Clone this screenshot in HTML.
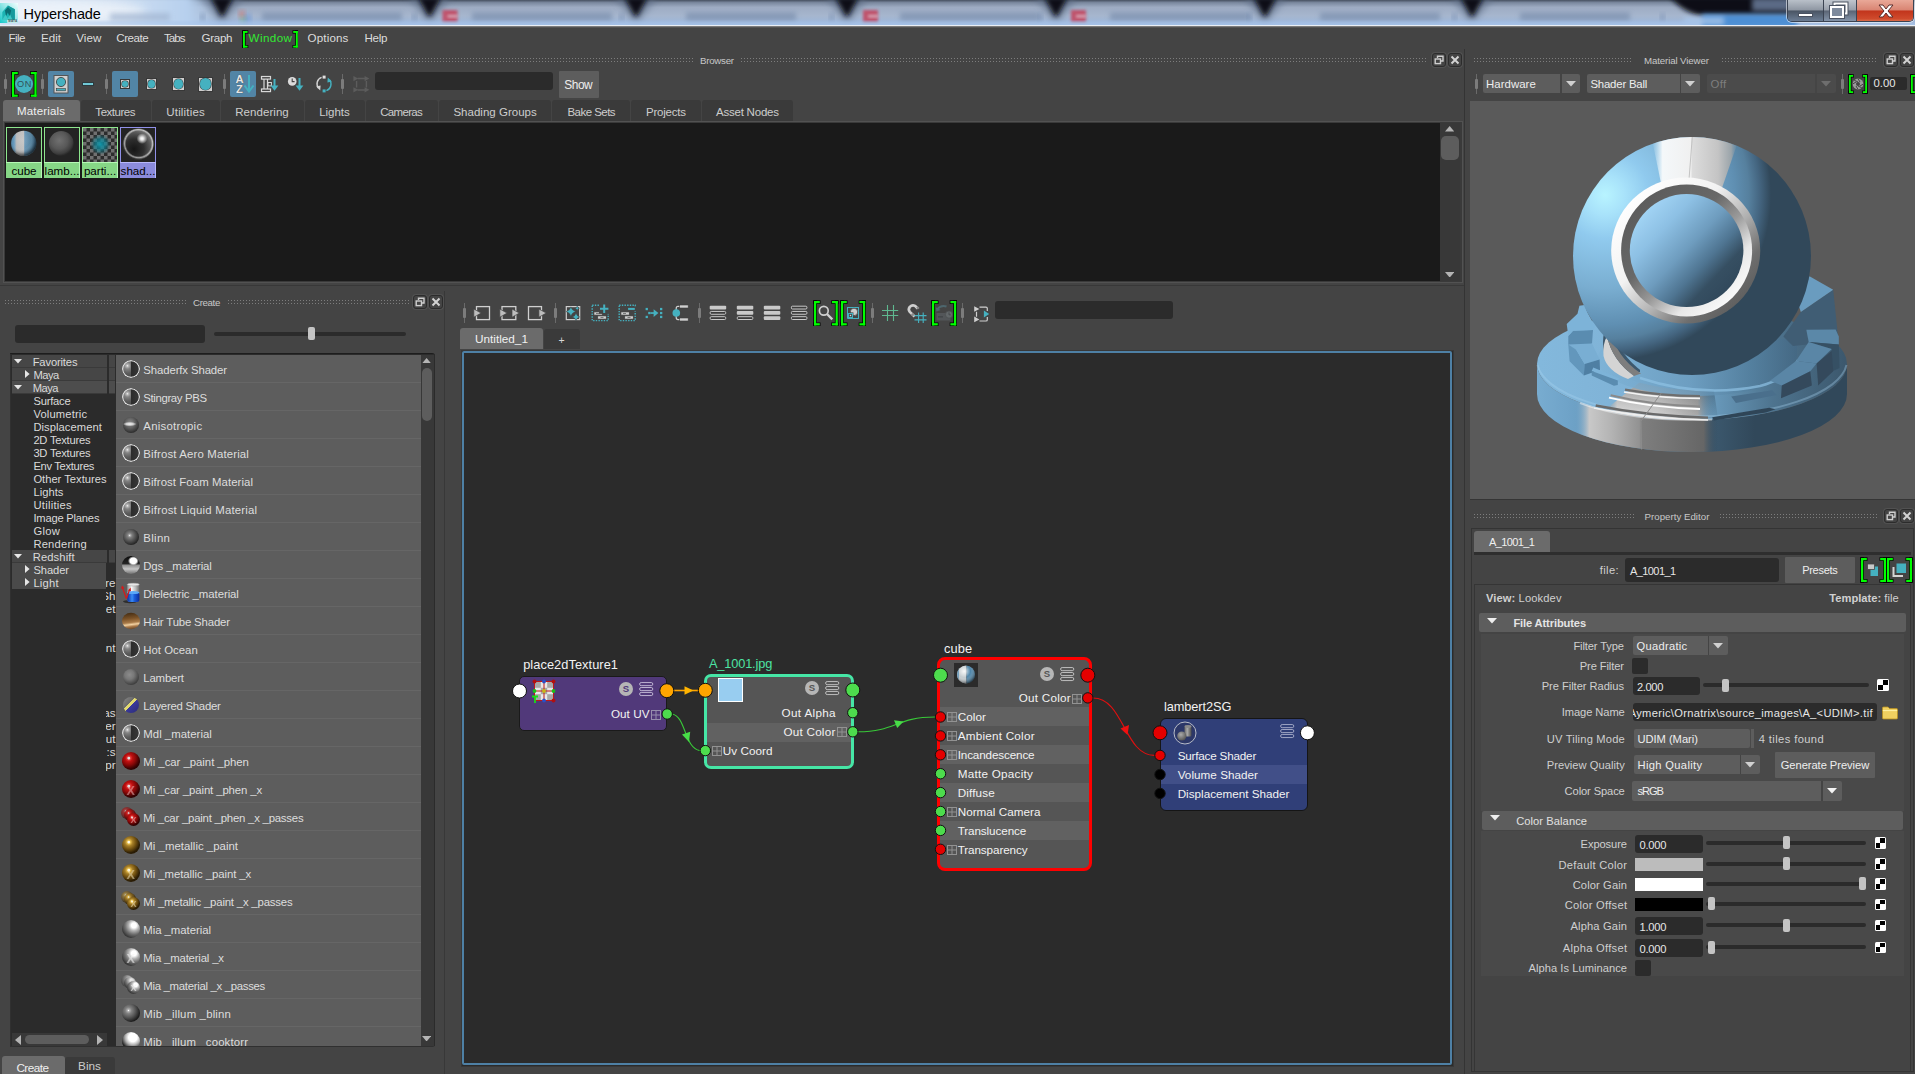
<!DOCTYPE html>
<html lang="en"><head><meta charset="utf-8"><title>Hypershade</title>
<style>
html,body{margin:0;padding:0;background:#444;}
body{width:1915px;height:1074px;overflow:hidden;position:relative;font-family:"Liberation Sans",sans-serif;}
#r{position:absolute;left:0;top:0;width:1915px;height:1074px;overflow:hidden;background:#444444;}
#r div,#r svg{position:absolute;}
.t{white-space:nowrap;}
.dots{height:6px;background-image:radial-gradient(circle,#7d7d7d 0.75px,rgba(0,0,0,0) 0.95px);background-size:3px 3px;background-position:0 0;}
</style></head>
<body><div id="r">
<svg style="left:0;top:0" width="1915" height="26" viewBox="0 0 1915 26"><defs><linearGradient id="tbg" x1="0" y1="0" x2="0" y2="1"><stop offset="0" stop-color="#465060"/><stop offset=".1" stop-color="#7a889e"/><stop offset=".28" stop-color="#9eacc3"/><stop offset=".6" stop-color="#a6b6ce"/><stop offset=".8" stop-color="#a0b7d7"/><stop offset="1" stop-color="#a9c5ea"/></linearGradient><linearGradient id="tbl" x1="0" y1="0" x2="1" y2="0"><stop offset="0" stop-color="#e6eef8"/><stop offset=".55" stop-color="#cfdff2"/><stop offset=".85" stop-color="#b7d0ee"/><stop offset="1" stop-color="#b7d0ee" stop-opacity="0"/></linearGradient><filter id="b1" x="-20%" y="-50%" width="140%" height="200%"><feGaussianBlur stdDeviation="1.4"/></filter><filter id="b2" x="-20%" y="-50%" width="140%" height="200%"><feGaussianBlur stdDeviation="2.4"/></filter><filter id="b3" x="-20%" y="-60%" width="140%" height="220%"><feGaussianBlur stdDeviation="3.2"/></filter><filter id="b4" x="-20%" y="-80%" width="140%" height="260%"><feGaussianBlur stdDeviation="5"/></filter></defs><rect width="1915" height="26" fill="url(#tbg)"/><rect x="-10" y="-4" width="232" height="34" fill="url(#tbl)" filter="url(#b2)"/><path d="M200 -3 H244 L226 20 H218Z" fill="#5a6a84" opacity=".55" filter="url(#b3)"/><path d="M210 -3 H234 L223.5 16 H220.5Z" fill="#0c1017" filter="url(#b2)"/><path d="M407.5 -3 H451.5 L433.5 20 H425.5Z" fill="#5a6a84" opacity=".55" filter="url(#b3)"/><path d="M417.5 -3 H441.5 L431.0 16 H428.0Z" fill="#0c1017" filter="url(#b2)"/><path d="M614 -3 H658 L640 20 H632Z" fill="#5a6a84" opacity=".55" filter="url(#b3)"/><path d="M624 -3 H648 L637.5 16 H634.5Z" fill="#0c1017" filter="url(#b2)"/><path d="M825 -3 H869 L851 20 H843Z" fill="#5a6a84" opacity=".55" filter="url(#b3)"/><path d="M835 -3 H859 L848.5 16 H845.5Z" fill="#0c1017" filter="url(#b2)"/><path d="M1034 -3 H1078 L1060 20 H1052Z" fill="#5a6a84" opacity=".55" filter="url(#b3)"/><path d="M1044 -3 H1068 L1057.5 16 H1054.5Z" fill="#0c1017" filter="url(#b2)"/><path d="M1243 -3 H1287 L1269 20 H1261Z" fill="#5a6a84" opacity=".55" filter="url(#b3)"/><path d="M1253 -3 H1277 L1266.5 16 H1263.5Z" fill="#0c1017" filter="url(#b2)"/><path d="M1450 -3 H1494 L1476 20 H1468Z" fill="#5a6a84" opacity=".55" filter="url(#b3)"/><path d="M1460 -3 H1484 L1473.5 16 H1470.5Z" fill="#0c1017" filter="url(#b2)"/><path d="M1670 -4 H1800 V16 H1704 Q1682 13 1670 -4Z" fill="#0b1018" filter="url(#b2)"/><rect x="1702" y="14" width="95" height="14" fill="#4d8fd4" filter="url(#b2)"/><rect x="1752" y="-2" width="40" height="13" fill="#7d93b5" opacity=".7" filter="url(#b2)"/><rect x="1684" y="17" width="40" height="8" fill="#a9c6ea" opacity=".8" filter="url(#b2)"/><rect x="262" y="12.5" width="140" height="8" fill="#7186a6" opacity=".6" filter="url(#b2)"/><rect x="472" y="12.5" width="140" height="8" fill="#7186a6" opacity=".6" filter="url(#b2)"/><rect x="686" y="12.5" width="110" height="8" fill="#7186a6" opacity=".6" filter="url(#b2)"/><rect x="900" y="12.5" width="140" height="8" fill="#7186a6" opacity=".6" filter="url(#b2)"/><rect x="1110" y="12.5" width="140" height="8" fill="#7186a6" opacity=".6" filter="url(#b2)"/><rect x="1320" y="12.5" width="120" height="8" fill="#7186a6" opacity=".6" filter="url(#b2)"/><rect x="1520" y="12.5" width="110" height="8" fill="#7186a6" opacity=".6" filter="url(#b2)"/><rect x="200" y="14" width="5" height="6" fill="#6f86aa" opacity=".55" filter="url(#b2)"/><rect x="412" y="14" width="5" height="6" fill="#6f86aa" opacity=".55" filter="url(#b2)"/><rect x="619" y="14" width="5" height="6" fill="#6f86aa" opacity=".55" filter="url(#b2)"/><rect x="829" y="14" width="5" height="6" fill="#6f86aa" opacity=".55" filter="url(#b2)"/><rect x="1038" y="14" width="5" height="6" fill="#6f86aa" opacity=".55" filter="url(#b2)"/><rect x="1247" y="14" width="5" height="6" fill="#6f86aa" opacity=".55" filter="url(#b2)"/><rect x="1452" y="14" width="5" height="6" fill="#6f86aa" opacity=".55" filter="url(#b2)"/><rect x="1660" y="14" width="5" height="6" fill="#6f86aa" opacity=".55" filter="url(#b2)"/><rect x="442.5" y="10" width="15" height="12" fill="#c63a55" opacity=".8" filter="url(#b1)"/><rect x="447.5" y="15" width="10" height="2.4" fill="#e8dbe2" opacity=".7" filter="url(#b1)"/><rect x="863" y="10" width="15" height="12" fill="#c63a55" opacity=".8" filter="url(#b1)"/><rect x="868" y="15" width="10" height="2.4" fill="#e8dbe2" opacity=".7" filter="url(#b1)"/><rect x="1071" y="10" width="15" height="12" fill="#c63a55" opacity=".8" filter="url(#b1)"/><rect x="1076" y="15" width="10" height="2.4" fill="#e8dbe2" opacity=".7" filter="url(#b1)"/><rect x="239" y="11" width="6" height="6" fill="#d86050" opacity=".55" filter="url(#b2)"/><rect x="245" y="14" width="6" height="8" fill="#5a8ad8" opacity=".5" filter="url(#b2)"/><rect x="240" y="17" width="6" height="5" fill="#58a868" opacity=".45" filter="url(#b2)"/><ellipse cx="66" cy="12" rx="80" ry="11" fill="#f2f6fb" opacity=".75" filter="url(#b4)"/><rect x="110" y="13" width="60" height="8" fill="#9fb2cf" opacity=".65" filter="url(#b2)"/><rect x="0" y="21.5" width="1700" height="3" fill="#a4c3ec" opacity=".55" filter="url(#b1)"/></svg>
<div style="left:0px;top:25px;width:1915px;height:1px;background:#e9eef5;"></div>
<div style="left:0px;top:26px;width:1915px;height:1px;background:#7c7c7c;"></div>
<div style="left:0px;top:27px;width:1915px;height:1px;background:#545454;"></div>
<svg style="left:0;top:2.8px" width="18.4" height="20.2" viewBox="0 2.8 18.4 20.2"><defs><linearGradient id="mi1" x1="1" y1="0" x2="0" y2="1"><stop offset="0" stop-color="#f4ffff"/><stop offset=".45" stop-color="#9ae8e8"/><stop offset="1" stop-color="#12c8c8"/></linearGradient></defs>
<rect x="0" y="2.8" width="18.3" height="20.2" fill="url(#mi1)"/>
<path d="M2.3 11.8 L7.8 5.4 L14.8 9 L14.8 19.6 L2.3 19.6Z" fill="#1cb4b4"/>
<path d="M7.8 5.4 L14.8 9 L14.8 19.6 L11.8 19.6 L9.8 13Z" fill="#16999c"/>
<path d="M5 10.2 L7.9 6.8 L11.2 10.4 L9.6 16.2 L7.8 12.4 L6 16.2Z" fill="#0a6e74"/>
<path d="M2.3 19.6 L5.6 14.4 L7.8 18.2 L10 14.4 L12.6 19.6Z" fill="#5fd8d6" opacity=".55"/>
<rect x="7.2" y="19.8" width="10.6" height="2.9" fill="#d4ecec" opacity=".9"/></svg>
<div class="t" style="left:8.2px;top:19.6px;font-size:3px;line-height:3px;color:#3a5a5c;font-weight:bold;letter-spacing:.2px">MAYA</div><div class="t" style="top:5.88px;font-size:14.5px;line-height:16px;color:#000;left:23.5px;letter-spacing:-0.088px;">Hypershade</div>
<div style="left:1787px;top:0px;width:127px;height:22px;border:1px solid #3b4352;border-top:none;border-radius:0 0 5px 5px;box-sizing:border-box;overflow:hidden;box-shadow:0 0 0 1px rgba(255,255,255,.55);"><div style="left:0;top:0;width:35px;height:22px;background:linear-gradient(to bottom,#b9c0c9 0%,#8f97a3 45%,#4a5564 50%,#6f8199 100%);border-right:1px solid #3b4352"></div><div style="left:36px;top:0;width:32px;height:22px;background:linear-gradient(to bottom,#c0c6ce 0%,#989fab 45%,#5b6575 50%,#8798ae 100%);border-right:1px solid #3b4352"></div><div style="left:69px;top:0;width:58px;height:22px;background:linear-gradient(to bottom,#e9a898 0%,#d98573 45%,#c2351c 50%,#cf4a2c 85%,#de7b55 100%)"></div></div>
<div style="left:1798px;top:13px;width:15px;height:4px;background:#fff;border:1px solid #4a5261;box-sizing:border-box;"></div>
<svg style="left:1828px;top:1px" width="22" height="20" viewBox="0 0 22 20"><rect x="6.5" y="2.5" width="12" height="10" fill="none" stroke="#4a5261" stroke-width="4"/><rect x="6.5" y="2.5" width="12" height="10" fill="none" stroke="#fff" stroke-width="2"/><rect x="3" y="6" width="12" height="10" fill="#7e8a9c" stroke="#4a5261" stroke-width="4"/><rect x="3" y="6" width="12" height="10" fill="#7e8a9c" stroke="#fff" stroke-width="2"/></svg>
<svg style="left:1877px;top:3px" width="18" height="16" viewBox="0 0 18 16"><path d="M2 2 L6 2 L9 6 L12 2 L16 2 L11 8 L16 14 L12 14 L9 10 L6 14 L2 14 L7 8Z" fill="#fff" stroke="#5a2c2a" stroke-width="1"/></svg>
<div class="t" style="top:29.98px;font-size:11.6px;line-height:16px;color:#dcdcdc;left:8.4px;letter-spacing:-0.529px;">File</div>
<div class="t" style="top:29.98px;font-size:11.6px;line-height:16px;color:#dcdcdc;left:41.1px;letter-spacing:-0.028px;">Edit</div>
<div class="t" style="top:29.98px;font-size:11.6px;line-height:16px;color:#dcdcdc;left:76.2px;letter-spacing:0.06px;">View</div>
<div class="t" style="top:29.98px;font-size:11.6px;line-height:16px;color:#dcdcdc;left:116.3px;letter-spacing:-0.482px;">Create</div>
<div class="t" style="top:29.98px;font-size:11.6px;line-height:16px;color:#dcdcdc;left:164px;letter-spacing:-1.0px;">Tabs</div>
<div class="t" style="top:29.98px;font-size:11.6px;line-height:16px;color:#dcdcdc;left:201.6px;letter-spacing:-0.334px;">Graph</div>
<div class="t" style="top:29.98px;font-size:11.6px;line-height:16px;color:#dcdcdc;left:307.5px;letter-spacing:0.155px;">Options</div>
<div class="t" style="top:29.98px;font-size:11.6px;line-height:16px;color:#dcdcdc;left:364.5px;letter-spacing:-0.287px;">Help</div>
<div class="t" style="top:29.98px;font-size:11.6px;line-height:16px;color:#33e833;left:248.6px;letter-spacing:0.43px;">Window</div>
<svg style="left:241.6px;top:29.6px" width="56.8" height="18.6" viewBox="-1 -1 56.8 18.6"><rect x="-0.7" y="-0.7" width="3.3" height="18.0" fill="#000"/><rect x="-0.7" y="-0.7" width="6.0" height="3.3" fill="#000"/><rect x="-0.7" y="14.000000000000002" width="6.0" height="3.3" fill="#000"/><rect x="52.199999999999996" y="-0.7" width="3.3" height="18.0" fill="#000"/><rect x="49.49999999999999" y="-0.7" width="6.0" height="3.3" fill="#000"/><rect x="49.49999999999999" y="14.000000000000002" width="6.0" height="3.3" fill="#000"/><rect x="0" y="0" width="1.9" height="16.6" fill="#00ff00"/><rect x="0" y="0" width="4.6" height="1.9" fill="#00ff00"/><rect x="0" y="14.700000000000001" width="4.6" height="1.9" fill="#00ff00"/><rect x="52.9" y="0" width="1.9" height="16.6" fill="#00ff00"/><rect x="50.199999999999996" y="0" width="4.6" height="1.9" fill="#00ff00"/><rect x="50.199999999999996" y="14.700000000000001" width="4.6" height="1.9" fill="#00ff00"/></svg>
<div class="dots" style="left:4.1px;top:56.7px;width:690px"></div>
<div class="t" style="top:53.14px;font-size:9.7px;line-height:16px;color:#c8c8c8;left:700px;letter-spacing:-0.256px;">Browser</div>
<div class="dots" style="left:740.1px;top:56.7px;width:687px"></div>
<div style="left:1432px;top:53px;width:14px;height:14px;background:#444;border:1px solid #2c2c2c;border-radius:3px;box-sizing:border-box;box-shadow:0 0 0 1px #515151;"></div>
<div style="left:1448px;top:53px;width:14px;height:14px;background:#444;border:1px solid #2c2c2c;border-radius:3px;box-sizing:border-box;box-shadow:0 0 0 1px #515151;"></div>
<svg style="left:1432px;top:53px" width="14" height="14" viewBox="0 0 14 14"><path d="M5.5 5 V3.2 H11 V8 H9" fill="none" stroke="#cfcfcf" stroke-width="1.4"/><rect x="3.2" y="6" width="5.3" height="4.6" fill="none" stroke="#cfcfcf" stroke-width="1.4"/></svg><svg style="left:1448px;top:53px" width="14" height="14" viewBox="0 0 14 14"><path d="M3.5 3.5 L10.5 10.5 M10.5 3.5 L3.5 10.5" stroke="#d2d2d2" stroke-width="2"/></svg>
<div style="left:5px;top:74px;width:1px;height:20px;background:#6a6a6a"></div><div style="left:4px;top:79.4px;width:3px;height:9.2px;background:#7c7c7c;border-radius:1px"></div>
<div style="left:42px;top:74px;width:1px;height:20px;background:#6a6a6a"></div><div style="left:41px;top:79.4px;width:3px;height:9.2px;background:#7c7c7c;border-radius:1px"></div>
<div style="left:106px;top:74px;width:1px;height:20px;background:#6a6a6a"></div><div style="left:105px;top:79.4px;width:3px;height:9.2px;background:#7c7c7c;border-radius:1px"></div>
<div style="left:224px;top:74px;width:1px;height:20px;background:#6a6a6a"></div><div style="left:223px;top:79.4px;width:3px;height:9.2px;background:#7c7c7c;border-radius:1px"></div>
<div style="left:342px;top:74px;width:1px;height:20px;background:#6a6a6a"></div><div style="left:341px;top:79.4px;width:3px;height:9.2px;background:#7c7c7c;border-radius:1px"></div>
<svg style="left:10.6px;top:70.6px" width="26.6" height="26.8" viewBox="-1 -1 26.6 26.8"><rect x="-0.7" y="-0.7" width="3.6" height="26.2" fill="#000"/><rect x="-0.7" y="-0.7" width="7.199999999999999" height="3.6" fill="#000"/><rect x="-0.7" y="21.900000000000002" width="7.199999999999999" height="3.6" fill="#000"/><rect x="21.700000000000003" y="-0.7" width="3.6" height="26.2" fill="#000"/><rect x="18.1" y="-0.7" width="7.199999999999999" height="3.6" fill="#000"/><rect x="18.1" y="21.900000000000002" width="7.199999999999999" height="3.6" fill="#000"/><rect x="0" y="0" width="2.2" height="24.8" fill="#00ff00"/><rect x="0" y="0" width="5.8" height="2.2" fill="#00ff00"/><rect x="0" y="22.6" width="5.8" height="2.2" fill="#00ff00"/><rect x="22.400000000000002" y="0" width="2.2" height="24.8" fill="#00ff00"/><rect x="18.8" y="0" width="5.8" height="2.2" fill="#00ff00"/><rect x="18.8" y="22.6" width="5.8" height="2.2" fill="#00ff00"/></svg>
<div style="left:14.8px;top:74.8px;width:18.6px;height:18.6px;border-radius:50%;background:#45b1c0"></div><div class="t" style="top:76.21px;font-size:9.2px;line-height:16px;color:#33525a;left:-175.50px;width:400px;text-align:center;letter-spacing:0.6px;">ON</div>
<div style="left:48px;top:71px;width:26px;height:26px;background:#5285a6;border-radius:2px;"></div>
<div style="left:112px;top:71px;width:26px;height:26px;background:#5285a6;border-radius:2px;"></div>
<div style="left:229.6px;top:71px;width:26px;height:26px;background:#5285a6;border-radius:2px;"></div>
<svg style="left:48px;top:71px" width="26" height="26" viewBox="0 0 26 26"><rect x="6" y="4.5" width="14" height="17.5" fill="#d0d0d0" stroke="#555" stroke-width="1"/><circle cx="13" cy="11" r="4.6" fill="#45b1c0" stroke="#3a3a3a" stroke-width=".8"/><rect x="8.5" y="17.6" width="9" height="2.2" fill="#45b1c0" stroke="#3a3a3a" stroke-width=".6"/></svg>
<div style="left:81.6px;top:82.4px;width:12.6px;height:4px;background:#45b1c0;border:1px solid #2c3a3e;box-sizing:border-box;box-shadow:inset 0 0 0 .7px #7fd0dc;"></div>
<div style="left:120.0px;top:78.9px;width:10px;height:10px;background:#cfcfcf;border:1px solid #383838;box-sizing:border-box"></div><div style="left:122.3px;top:81.2px;width:5.4px;height:5.4px;background:#45b1c0;border-radius:50%;box-shadow:0 0 0 .6px #3a3a3a"></div>
<div style="left:146.10000000000002px;top:78.3px;width:11.4px;height:11.4px;background:#cfcfcf;border:1px solid #383838;box-sizing:border-box"></div><div style="left:148.10000000000002px;top:80.3px;width:7.4px;height:7.4px;background:#45b1c0;border-radius:50%;box-shadow:0 0 0 .6px #3a3a3a"></div>
<div style="left:172.20000000000002px;top:77.4px;width:13.2px;height:13.2px;background:#cfcfcf;border:1px solid #383838;box-sizing:border-box"></div><div style="left:174.10000000000002px;top:79.3px;width:9.4px;height:9.4px;background:#45b1c0;border-radius:50%;box-shadow:0 0 0 .6px #3a3a3a"></div>
<div style="left:197.8px;top:76.5px;width:15px;height:15px;background:#cfcfcf;border:1px solid #383838;box-sizing:border-box"></div><div style="left:199.5px;top:78.2px;width:11.6px;height:11.6px;background:#45b1c0;border-radius:50%;box-shadow:0 0 0 .6px #3a3a3a"></div>
<div class="t" style="top:71.32px;font-size:11.2px;line-height:16px;color:#e6e6e6;left:235.4px;font-weight:bold;text-shadow:0 0 1px #333;">A</div>
<div class="t" style="top:81.02px;font-size:11.2px;line-height:16px;color:#e6e6e6;left:236px;font-weight:bold;text-shadow:0 0 1px #333;">Z</div>
<svg style="left:243px;top:73px" width="12" height="22" viewBox="0 0 12 22"><path d="M6 2 V17" stroke="#45b1c0" stroke-width="2"/><path d="M1.5 12.5 L6 18.5 L10.5 12.5" fill="none" stroke="#45b1c0" stroke-width="2"/></svg>
<svg style="left:260px;top:73px" width="20" height="22" viewBox="0 0 20 22"><rect x="1.5" y="3.5" width="9" height="2.6" fill="#444" stroke="#d8d8d8" stroke-width="1.2"/><rect x="1.5" y="16" width="9" height="2.6" fill="#444" stroke="#d8d8d8" stroke-width="1.2"/><path d="M4 6 V16 M7.5 6 V16" stroke="#d8d8d8" stroke-width="1.2"/><rect x="8" y="9.5" width="3.4" height="3.4" fill="#444" stroke="#d8d8d8" stroke-width="1"/><path d="M14.5 6 V16" stroke="#45b1c0" stroke-width="2"/><path d="M10.6 12.5 L14.5 17.8 L18.4 12.5Z" fill="#45b1c0"/></svg>
<svg style="left:287px;top:73px" width="18" height="22" viewBox="0 0 18 22"><circle cx="5.2" cy="8.4" r="4.3" fill="#dcdcdc"/><path d="M5.2 5.6 V8.6 H7.6" stroke="#444" stroke-width="1.1" fill="none"/><path d="M12.5 5 V16" stroke="#45b1c0" stroke-width="2"/><path d="M8.6 12.5 L12.5 17.8 L16.4 12.5Z" fill="#45b1c0"/></svg>
<svg style="left:314px;top:74px" width="20" height="20" viewBox="0 0 20 20"><path d="M7.6 3.4 A6.8 6.8 0 0 0 4.6 14.2" fill="none" stroke="#d4d4d4" stroke-width="1.4"/><path d="M2.2 12.6 L6.2 16.4 L6.6 11.6Z" fill="#d4d4d4"/><path d="M12.4 16.6 A6.8 6.8 0 0 0 15.4 5.8" fill="none" stroke="#45b1c0" stroke-width="1.4"/><path d="M17.8 7.4 L13.8 3.6 L13.4 8.4Z" fill="#45b1c0"/><rect x="8.6" y="1.6" width="3" height="3" fill="#e0e0e0"/><rect x="8.6" y="15.4" width="3" height="3" fill="#45b1c0"/></svg>
<svg style="left:352px;top:74px" width="19" height="20" viewBox="0 0 19 20"><path d="M5.5 4.5 H13.5 M5.5 16 H13.5 M4.6 7 V13.4 M14.4 7 V13.4" stroke="#5c5c5c" stroke-width="1.4" fill="none"/><path d="M1.4 2 L6.2 4.6 L1.4 7.2Z M1.4 13.2 L6.2 15.8 L1.4 18.4Z M12.6 2 L17.4 4.6 L12.6 7.2Z M12.6 13.2 L17.4 15.8 L12.6 18.4Z" fill="#5c5c5c"/></svg>
<div style="left:375px;top:72px;width:178px;height:18px;background:#2b2b2b;border-radius:3px;"></div>
<div style="left:558.5px;top:71px;width:40px;height:26.5px;background:#5d5d5d;border-radius:1px;"></div>
<div class="t" style="top:77.18px;font-size:11.9px;line-height:16px;color:#eeeeee;left:564.3px;letter-spacing:-0.451px;">Show</div>
<div style="left:3px;top:100px;width:77px;height:21px;background:#6b6b6b;border-radius:3px 3px 0 0;"></div>
<div class="t" style="top:103.22px;font-size:11.5px;line-height:16px;color:#f0f0f0;left:-158.92px;width:400px;text-align:center;letter-spacing:0.168px;">Materials</div>
<div style="left:80.5px;top:100.3px;width:70.5px;height:20.7px;background:#3a3a3a;border-radius:3px 3px 0 0;"></div>
<div class="t" style="top:104.02px;font-size:11.5px;line-height:16px;color:#cdcdcd;left:-84.84px;width:400px;text-align:center;letter-spacing:-0.481px;">Textures</div>
<div style="left:151.5px;top:100.3px;width:68.5px;height:20.7px;background:#3a3a3a;border-radius:3px 3px 0 0;"></div>
<div class="t" style="top:104.02px;font-size:11.5px;line-height:16px;color:#cdcdcd;left:-14.42px;width:400px;text-align:center;letter-spacing:0.168px;">Utilities</div>
<div style="left:220.5px;top:100.3px;width:83.0px;height:20.7px;background:#3a3a3a;border-radius:3px 3px 0 0;"></div>
<div class="t" style="top:104.02px;font-size:11.5px;line-height:16px;color:#cdcdcd;left:62.03px;width:400px;text-align:center;letter-spacing:0.053px;">Rendering</div>
<div style="left:304.5px;top:100.3px;width:60.5px;height:20.7px;background:#3a3a3a;border-radius:3px 3px 0 0;"></div>
<div class="t" style="top:104.02px;font-size:11.5px;line-height:16px;color:#cdcdcd;left:134.49px;width:400px;text-align:center;letter-spacing:-0.018px;">Lights</div>
<div style="left:366px;top:100.3px;width:71.5px;height:20.7px;background:#3a3a3a;border-radius:3px 3px 0 0;"></div>
<div class="t" style="top:104.02px;font-size:11.5px;line-height:16px;color:#cdcdcd;left:201.16px;width:400px;text-align:center;letter-spacing:-0.675px;">Cameras</div>
<div style="left:438.5px;top:100.3px;width:112.5px;height:20.7px;background:#3a3a3a;border-radius:3px 3px 0 0;"></div>
<div class="t" style="top:104.02px;font-size:11.5px;line-height:16px;color:#cdcdcd;left:295.11px;width:400px;text-align:center;letter-spacing:0.022px;">Shading Groups</div>
<div style="left:552px;top:100.3px;width:78px;height:20.7px;background:#3a3a3a;border-radius:3px 3px 0 0;"></div>
<div class="t" style="top:104.02px;font-size:11.5px;line-height:16px;color:#cdcdcd;left:391.23px;width:400px;text-align:center;letter-spacing:-0.54px;">Bake Sets</div>
<div style="left:631px;top:100.3px;width:70px;height:20.7px;background:#3a3a3a;border-radius:3px 3px 0 0;"></div>
<div class="t" style="top:104.02px;font-size:11.5px;line-height:16px;color:#cdcdcd;left:465.89px;width:400px;text-align:center;letter-spacing:-0.221px;">Projects</div>
<div style="left:702px;top:100.3px;width:91px;height:20.7px;background:#3a3a3a;border-radius:3px 3px 0 0;"></div>
<div class="t" style="top:104.02px;font-size:11.5px;line-height:16px;color:#cdcdcd;left:547.39px;width:400px;text-align:center;letter-spacing:-0.22px;">Asset Nodes</div>
<div style="left:3px;top:121px;width:1460px;height:162px;background:#3a3a3a;border:1px solid #525252;box-sizing:border-box;"></div>
<div style="left:5px;top:123px;width:1435px;height:158px;background:#1a1a1a;"></div>
<div style="left:1440px;top:123px;width:20px;height:158px;background:#383838;"></div>
<div style="left:1441px;top:136px;width:18px;height:24px;background:#5d5d5d;border-radius:5px;"></div>
<svg style="left:1444.8px;top:126px" width="9.4" height="5.6" viewBox="0 0 9.4 5.6"><path d="M0 5.6 L4.7 0 L9.4 5.6Z" fill="#b4b4b4"/></svg><svg style="left:1444.8px;top:271.9px" width="9.4" height="5.6" viewBox="0 0 9.4 5.6"><path d="M0 0 L4.7 5.6 L9.4 0Z" fill="#b4b4b4"/></svg>
<div style="left:6px;top:127px;width:36px;height:51.3px;background:#8ee68e;"></div>
<div style="left:6.9px;top:127.9px;width:34.2px;height:33.8px;background:#232323;"></div>
<div style="left:6px;top:162.4px;width:36px;height:15.9px;background:#86d686;border-top:1.4px solid #b6f8b6;border-right:1.2px solid #b6f8b6;box-sizing:border-box;"></div>
<div class="t" style="top:162.68px;font-size:11.6px;line-height:16px;color:#000;left:-176.00px;width:400px;text-align:center;">cube</div>
<div style="left:44px;top:127px;width:36px;height:51.3px;background:#8ee68e;"></div>
<div style="left:44.9px;top:127.9px;width:34.2px;height:33.8px;background:#232323;"></div>
<div style="left:44px;top:162.4px;width:36px;height:15.9px;background:#86d686;border-top:1.4px solid #b6f8b6;border-right:1.2px solid #b6f8b6;box-sizing:border-box;"></div>
<div class="t" style="top:162.68px;font-size:11.6px;line-height:16px;color:#000;left:-138.00px;width:400px;text-align:center;">lamb...</div>
<div style="left:82px;top:127px;width:36px;height:51.3px;background:#8ee68e;"></div>
<div style="left:82.9px;top:127.9px;width:34.2px;height:33.8px;background:#232323;"></div>
<div style="left:82px;top:162.4px;width:36px;height:15.9px;background:#86d686;border-top:1.4px solid #b6f8b6;border-right:1.2px solid #b6f8b6;box-sizing:border-box;"></div>
<div class="t" style="top:162.68px;font-size:11.6px;line-height:16px;color:#000;left:-100.00px;width:400px;text-align:center;">parti...</div>
<div style="left:120px;top:127px;width:36px;height:51.3px;background:#9090e8;"></div>
<div style="left:120.9px;top:127.9px;width:34.2px;height:33.8px;background:#232323;"></div>
<div style="left:120px;top:162.4px;width:36px;height:15.9px;background:#8b8bdc;border-top:1.4px solid #b8b8fa;border-right:1.2px solid #b8b8fa;box-sizing:border-box;"></div>
<div class="t" style="top:162.68px;font-size:11.6px;line-height:16px;color:#000;left:-62.00px;width:400px;text-align:center;">shad...</div>
<svg style="left:7px;top:128px" width="34" height="34" viewBox="0 0 34 34"><defs><radialGradient id="sw1" cx="42%" cy="36%" r="62%"><stop offset="0" stop-color="#fff" stop-opacity=".12"/><stop offset=".55" stop-color="#fff" stop-opacity="0"/><stop offset=".8" stop-color="#000" stop-opacity=".15"/><stop offset="1" stop-color="#000" stop-opacity=".6"/></radialGradient><linearGradient id="sw1b" x1="0" x2="1"><stop offset="0" stop-color="#4f84a8"/><stop offset=".12" stop-color="#6a9cbf"/><stop offset=".22" stop-color="#bababa"/><stop offset=".5" stop-color="#c2c2c2"/><stop offset=".54" stop-color="#6a97b6"/><stop offset=".8" stop-color="#56839f"/><stop offset="1" stop-color="#3a6482"/></linearGradient></defs><circle cx="16.7" cy="15.4" r="12.6" fill="url(#sw1b)"/><circle cx="16.7" cy="15.4" r="12.6" fill="url(#sw1)"/></svg>
<svg style="left:45px;top:128px" width="34" height="34" viewBox="0 0 34 34"><defs><radialGradient id="sw2" cx="42%" cy="38%" r="62%"><stop offset="0" stop-color="#707070"/><stop offset=".55" stop-color="#585858"/><stop offset=".85" stop-color="#3e3e3e"/><stop offset="1" stop-color="#262626"/></radialGradient></defs><circle cx="16.3" cy="15.5" r="12.4" fill="url(#sw2)"/></svg>
<svg style="left:83px;top:128px" width="34" height="34" viewBox="0 0 34 34"><defs><pattern id="chk" width="7" height="7" patternUnits="userSpaceOnUse"><rect width="7" height="7" fill="#2c2c2c"/><rect width="3.5" height="3.5" fill="#707070"/><rect x="3.5" y="3.5" width="3.5" height="3.5" fill="#707070"/></pattern><radialGradient id="sw3" cx="50%" cy="50%" r="50%"><stop offset="0" stop-color="#0e98ac" stop-opacity=".95"/><stop offset=".5" stop-color="#0f8496" stop-opacity=".7"/><stop offset="1" stop-color="#107888" stop-opacity="0"/></radialGradient></defs><rect width="34" height="34" fill="url(#chk)"/><circle cx="17.4" cy="16.4" r="10.5" fill="url(#sw3)"/></svg>
<svg style="left:121px;top:128px" width="34" height="34" viewBox="0 0 34 34"><defs><radialGradient id="sw4" gradientUnits="userSpaceOnUse" cx="13" cy="21" r="22"><stop offset="0" stop-color="#161616"/><stop offset=".45" stop-color="#2e2e2e"/><stop offset=".75" stop-color="#585858"/><stop offset="1" stop-color="#8a8a8a"/></radialGradient><radialGradient id="sw4b" cx="50%" cy="50%" r="50%"><stop offset="0" stop-color="#fff"/><stop offset=".3" stop-color="#fff" stop-opacity=".85"/><stop offset="1" stop-color="#fff" stop-opacity="0"/></radialGradient><radialGradient id="sw4c" cx="50%" cy="50%" r="50%"><stop offset=".8" stop-color="#fff" stop-opacity="0"/><stop offset=".9" stop-color="#fff" stop-opacity=".55"/><stop offset="1" stop-color="#fff" stop-opacity="0"/></radialGradient><clipPath id="sw4k"><rect width="34" height="34"/></clipPath></defs><g clip-path="url(#sw4k)"><circle cx="17" cy="16.4" r="15.3" fill="url(#sw4)"/><circle cx="17.6" cy="15.6" r="15.6" fill="url(#sw4c)"/><circle cx="21" cy="10.6" r="5.4" fill="url(#sw4b)"/></g></svg>
<div style="left:0px;top:285px;width:1464px;height:1px;background:#383838;"></div>
<div class="dots" style="left:4.1px;top:299.1px;width:183px"></div>
<div class="t" style="top:295.04px;font-size:9.7px;line-height:16px;color:#c8c8c8;left:193px;letter-spacing:-0.355px;">Create</div>
<div class="dots" style="left:227.1px;top:299.1px;width:183px"></div>
<div style="left:412.5px;top:294.5px;width:14px;height:14px;background:#444;border:1px solid #2c2c2c;border-radius:3px;box-sizing:border-box;box-shadow:0 0 0 1px #515151;"></div>
<div style="left:428.5px;top:294.5px;width:14px;height:14px;background:#444;border:1px solid #2c2c2c;border-radius:3px;box-sizing:border-box;box-shadow:0 0 0 1px #515151;"></div>
<svg style="left:412.5px;top:294.5px" width="14" height="14" viewBox="0 0 14 14"><path d="M5.5 5 V3.2 H11 V8 H9" fill="none" stroke="#cfcfcf" stroke-width="1.4"/><rect x="3.2" y="6" width="5.3" height="4.6" fill="none" stroke="#cfcfcf" stroke-width="1.4"/></svg><svg style="left:428.5px;top:294.5px" width="14" height="14" viewBox="0 0 14 14"><path d="M3.5 3.5 L10.5 10.5 M10.5 3.5 L3.5 10.5" stroke="#d2d2d2" stroke-width="2"/></svg>
<div style="left:444px;top:291px;width:1px;height:783px;background:#383838;"></div>
<div style="left:15px;top:325px;width:190px;height:18px;background:#2b2b2b;border-radius:3px;"></div>
<div style="left:214px;top:332px;width:192px;height:4px;background:#2b2b2b;border-radius:2px;"></div>
<div style="left:308px;top:327px;width:7px;height:13px;background:#c4c4c4;border-radius:2px;"></div>
<div style="left:10px;top:353px;width:425px;height:694px;background:#2b2b2b;border:1px solid #303030;border-top:2px solid #1d1d1d;border-right:1.3px solid #1d1d1d;box-sizing:border-box;border-radius:0 3px 3px 0;"></div>
<div style="left:11px;top:354px;width:424px;height:692px;background:#2b2b2b;"></div>
<div style="left:12px;top:355px;width:95px;height:12px;background:#464646;border-bottom:1px solid #3a3a3a;"></div>
<div style="left:109px;top:355px;width:6px;height:12px;background:#464646;border-bottom:1px solid #3a3a3a;"></div>
<svg style="left:14px;top:359px" width="8" height="5" viewBox="0 0 8 5"><path d="M0 0 H8 L4 4.6Z" fill="#e6e6e6"/></svg><div class="t" style="top:353.82px;font-size:11.2px;line-height:16px;color:#dadada;left:32.7px;letter-spacing:-0.152px;">Favorites</div>
<div style="left:12px;top:368px;width:95px;height:12px;background:#464646;border-bottom:1px solid #3a3a3a;"></div>
<div style="left:109px;top:368px;width:6px;height:12px;background:#464646;border-bottom:1px solid #3a3a3a;"></div>
<svg style="left:25px;top:370.3px" width="5" height="8" viewBox="0 0 5 8"><path d="M0 0 V8 L4.6 4Z" fill="#e6e6e6"/></svg><div class="t" style="top:366.82px;font-size:11.2px;line-height:16px;color:#dadada;left:33.4px;letter-spacing:-0.487px;">Maya</div>
<div style="left:12px;top:381px;width:95px;height:12px;background:#4d4d4d;border-bottom:1px solid #3a3a3a;"></div>
<div style="left:109px;top:381px;width:6px;height:12px;background:#4d4d4d;border-bottom:1px solid #3a3a3a;"></div>
<svg style="left:14px;top:385px" width="8" height="5" viewBox="0 0 8 5"><path d="M0 0 H8 L4 4.6Z" fill="#e6e6e6"/></svg><div class="t" style="top:379.82px;font-size:11.2px;line-height:16px;color:#dadada;left:32.7px;letter-spacing:-0.487px;">Maya</div>
<div class="t" style="top:392.82px;font-size:11.2px;line-height:16px;color:#dadada;left:33.4px;letter-spacing:-0.21px;">Surface</div>
<div class="t" style="top:405.82px;font-size:11.2px;line-height:16px;color:#dadada;left:33.4px;letter-spacing:0.163px;">Volumetric</div>
<div class="t" style="top:418.82px;font-size:11.2px;line-height:16px;color:#dadada;left:33.4px;letter-spacing:0.065px;">Displacement</div>
<div class="t" style="top:431.82px;font-size:11.2px;line-height:16px;color:#dadada;left:33.4px;letter-spacing:-0.24px;">2D Textures</div>
<div class="t" style="top:444.82px;font-size:11.2px;line-height:16px;color:#dadada;left:33.4px;letter-spacing:-0.24px;">3D Textures</div>
<div class="t" style="top:457.82px;font-size:11.2px;line-height:16px;color:#dadada;left:33.4px;letter-spacing:-0.315px;">Env Textures</div>
<div class="t" style="top:470.82px;font-size:11.2px;line-height:16px;color:#dadada;left:33.4px;letter-spacing:-0.005px;">Other Textures</div>
<div class="t" style="top:483.82px;font-size:11.2px;line-height:16px;color:#dadada;left:33.4px;letter-spacing:0.028px;">Lights</div>
<div class="t" style="top:496.82px;font-size:11.2px;line-height:16px;color:#dadada;left:33.4px;letter-spacing:0.28px;">Utilities</div>
<div class="t" style="top:509.82px;font-size:11.2px;line-height:16px;color:#dadada;left:33.4px;letter-spacing:-0.211px;">Image Planes</div>
<div class="t" style="top:522.82px;font-size:11.2px;line-height:16px;color:#dadada;left:33.4px;letter-spacing:0.3px;">Glow</div>
<div class="t" style="top:535.82px;font-size:11.2px;line-height:16px;color:#dadada;left:33.4px;letter-spacing:0.209px;">Rendering</div>
<div style="left:12px;top:550px;width:95px;height:12px;background:#464646;border-bottom:1px solid #3a3a3a;"></div>
<div style="left:109px;top:550px;width:6px;height:12px;background:#464646;border-bottom:1px solid #3a3a3a;"></div>
<svg style="left:14px;top:554px" width="8" height="5" viewBox="0 0 8 5"><path d="M0 0 H8 L4 4.6Z" fill="#e6e6e6"/></svg><div class="t" style="top:548.82px;font-size:11.2px;line-height:16px;color:#dadada;left:32.7px;letter-spacing:0.122px;">Redshift</div>
<div style="left:12px;top:563px;width:94px;height:13px;background:#4a4a4a;"></div>
<svg style="left:25px;top:565.3px" width="5" height="8" viewBox="0 0 5 8"><path d="M0 0 V8 L4.6 4Z" fill="#e6e6e6"/></svg><div class="t" style="top:561.82px;font-size:11.2px;line-height:16px;color:#dadada;left:33.4px;letter-spacing:-0.096px;">Shader</div>
<div style="left:12px;top:576px;width:94px;height:13px;background:#4a4a4a;"></div>
<svg style="left:25px;top:578.3px" width="5" height="8" viewBox="0 0 5 8"><path d="M0 0 V8 L4.6 4Z" fill="#e6e6e6"/></svg><div class="t" style="top:574.82px;font-size:11.2px;line-height:16px;color:#dadada;left:33.4px;letter-spacing:0.234px;">Light</div>
<div style="left:106px;top:355px;width:9.5px;height:680px;overflow:hidden;"><div class="t" style="right:0;top:220px;font-size:11.6px;line-height:16px;color:#dadada">re</div><div class="t" style="right:0;top:233px;font-size:11.6px;line-height:16px;color:#dadada">Sh</div><div class="t" style="right:0;top:246px;font-size:11.6px;line-height:16px;color:#dadada">et</div><div class="t" style="right:0;top:285px;font-size:11.6px;line-height:16px;color:#dadada">Int</div><div class="t" style="right:0;top:350px;font-size:11.6px;line-height:16px;color:#dadada">as</div><div class="t" style="right:0;top:363px;font-size:11.6px;line-height:16px;color:#dadada">er</div><div class="t" style="right:0;top:376px;font-size:11.6px;line-height:16px;color:#dadada">ut</div><div class="t" style="right:0;top:389px;font-size:11.6px;line-height:16px;color:#dadada">:s</div><div class="t" style="right:0;top:402px;font-size:11.6px;line-height:16px;color:#dadada">pr</div></div>
<div style="left:12px;top:1033px;width:95px;height:13px;background:#383838;"></div>
<div style="left:25px;top:1034.5px;width:63.5px;height:9.5px;background:#5d5d5d;border-radius:5px;"></div>
<svg style="left:14.5px;top:1034.5px" width="6" height="10" viewBox="0 0 6 10"><path d="M6 0 V10 L0 5Z" fill="#b4b4b4"/></svg><svg style="left:97px;top:1034.5px" width="6" height="10" viewBox="0 0 6 10"><path d="M0 0 V10 L6 5Z" fill="#b4b4b4"/></svg>
<div style="left:116px;top:354.7px;width:305px;height:691.3px;background:#5d5d5d;overflow:hidden;"><div style="left:0;top:0px;width:305px;height:28px;background:#5d5d5d;border-bottom:1px solid #666666;box-sizing:border-box"></div><div style="left:6px;top:5.1px;width:18px;height:18px;border-radius:50%;background:linear-gradient(to right,rgba(0,0,0,0) 48%,#2c2c2c 52%,#3a3a3a 100%),radial-gradient(circle farthest-side at 30% 32%,#f4f4f4 0%,#b8b8b8 9%,#828282 26%,#5c5c5c 60%,#484848 100%);box-shadow:inset 0 0 0 1.2px #e4e4e4;"></div><div class="t" style="top:7.05px;font-size:11.4px;line-height:16px;color:#dedede;left:27.3px;letter-spacing:-0.121px;">Shaderfx Shader</div>
<div style="left:0;top:28px;width:305px;height:28px;background:#5d5d5d;border-bottom:1px solid #666666;box-sizing:border-box"></div><div style="left:6px;top:33.1px;width:18px;height:18px;border-radius:50%;background:linear-gradient(to right,rgba(0,0,0,0) 48%,#2c2c2c 52%,#3a3a3a 100%),radial-gradient(circle farthest-side at 30% 32%,#f4f4f4 0%,#b8b8b8 9%,#828282 26%,#5c5c5c 60%,#484848 100%);box-shadow:inset 0 0 0 1.2px #e4e4e4;"></div><div class="t" style="top:35.05px;font-size:11.4px;line-height:16px;color:#dedede;left:27.3px;letter-spacing:-0.369px;">Stingray PBS</div>
<div style="left:0;top:56px;width:305px;height:28px;background:#5d5d5d;border-bottom:1px solid #666666;box-sizing:border-box"></div><div style="left:7px;top:62.099999999999994px;width:16px;height:16px;border-radius:50%;background:radial-gradient(ellipse 42% 14% at 42% 44%,#f4f4f4 0%,#cfcfcf 55%,rgba(0,0,0,0) 100%),radial-gradient(circle farthest-side at 45% 38%,#8c8c8c 0%,#666 45%,#2c2c2c 100%);"></div><div class="t" style="top:63.05px;font-size:11.4px;line-height:16px;color:#dedede;left:27.3px;letter-spacing:0.244px;">Anisotropic</div>
<div style="left:0;top:84px;width:305px;height:28px;background:#5d5d5d;border-bottom:1px solid #666666;box-sizing:border-box"></div><div style="left:6px;top:89.1px;width:18px;height:18px;border-radius:50%;background:linear-gradient(to right,rgba(0,0,0,0) 48%,#2c2c2c 52%,#3a3a3a 100%),radial-gradient(circle farthest-side at 30% 32%,#f4f4f4 0%,#b8b8b8 9%,#828282 26%,#5c5c5c 60%,#484848 100%);box-shadow:inset 0 0 0 1.2px #e4e4e4;"></div><div class="t" style="top:91.05px;font-size:11.4px;line-height:16px;color:#dedede;left:27.3px;letter-spacing:0.152px;">Bifrost Aero Material</div>
<div style="left:0;top:112px;width:305px;height:28px;background:#5d5d5d;border-bottom:1px solid #666666;box-sizing:border-box"></div><div style="left:6px;top:117.1px;width:18px;height:18px;border-radius:50%;background:linear-gradient(to right,rgba(0,0,0,0) 48%,#2c2c2c 52%,#3a3a3a 100%),radial-gradient(circle farthest-side at 30% 32%,#f4f4f4 0%,#b8b8b8 9%,#828282 26%,#5c5c5c 60%,#484848 100%);box-shadow:inset 0 0 0 1.2px #e4e4e4;"></div><div class="t" style="top:119.05px;font-size:11.4px;line-height:16px;color:#dedede;left:27.3px;letter-spacing:0.072px;">Bifrost Foam Material</div>
<div style="left:0;top:140px;width:305px;height:28px;background:#5d5d5d;border-bottom:1px solid #666666;box-sizing:border-box"></div><div style="left:6px;top:145.1px;width:18px;height:18px;border-radius:50%;background:linear-gradient(to right,rgba(0,0,0,0) 48%,#2c2c2c 52%,#3a3a3a 100%),radial-gradient(circle farthest-side at 30% 32%,#f4f4f4 0%,#b8b8b8 9%,#828282 26%,#5c5c5c 60%,#484848 100%);box-shadow:inset 0 0 0 1.2px #e4e4e4;"></div><div class="t" style="top:147.05px;font-size:11.4px;line-height:16px;color:#dedede;left:27.3px;letter-spacing:0.194px;">Bifrost Liquid Material</div>
<div style="left:0;top:168px;width:305px;height:28px;background:#5d5d5d;border-bottom:1px solid #666666;box-sizing:border-box"></div><div style="left:7px;top:174.1px;width:16px;height:16px;border-radius:50%;background:radial-gradient(circle farthest-side at 42% 40%,#ffffff 0%,#b4b4b4 8%,#7e7e7e 24%,#585858 55%,#242424 100%);"></div><div class="t" style="top:175.05px;font-size:11.4px;line-height:16px;color:#dedede;left:27.3px;letter-spacing:0.314px;">Blinn</div>
<div style="left:0;top:196px;width:305px;height:28px;background:#5d5d5d;border-bottom:1px solid #666666;box-sizing:border-box"></div><div style="left:6px;top:201.1px;width:18px;height:18px;border-radius:50%;background:radial-gradient(ellipse 30% 26% at 63% 27%,#ffffff 0%,#ffffff 62%,rgba(255,255,255,0) 100%),linear-gradient(to bottom,#0c0c0c 0%,#262626 44%,#8e8e8e 50%,#c6c6c6 72%,#707070 100%);"></div><div class="t" style="top:203.05px;font-size:11.4px;line-height:16px;color:#dedede;left:27.3px;letter-spacing:-0.148px;">Dgs _material</div>
<div style="left:0;top:224px;width:305px;height:28px;background:#5d5d5d;border-bottom:1px solid #666666;box-sizing:border-box"></div><svg style="left:5px;top:227.1px" width="22" height="22" viewBox="0 0 22 22"><defs><linearGradient id="dg1" x1="0" x2="1"><stop offset="0" stop-color="#8a8a8a"/><stop offset=".35" stop-color="#f8f8f8"/><stop offset=".7" stop-color="#b8b8b8"/><stop offset="1" stop-color="#6a6a6a"/></linearGradient><linearGradient id="dg2" x1="0" x2="1"><stop offset="0" stop-color="#0a2a9a"/><stop offset=".4" stop-color="#3a8cf4"/><stop offset=".6" stop-color="#1a5cd8"/><stop offset="1" stop-color="#0a2a9a"/></linearGradient></defs><ellipse cx="9" cy="19.6" rx="7" ry="1.6" fill="#1a1a1a" opacity=".7"/><rect x="6.2" y="1.4" width="12.2" height="18.6" rx="2.4" fill="url(#dg1)"/><rect x="6.2" y="10.4" width="12.2" height="9.6" rx="2.2" fill="url(#dg2)"/><ellipse cx="12.3" cy="10.6" rx="6.1" ry="1.5" fill="#5aa8f8"/><ellipse cx="12.3" cy="2.6" rx="6.1" ry="1.4" fill="#e8e8e8" stroke="#9a9a9a" stroke-width=".5"/><path d="M5.4 16.6 L1.4 5.4 M5.4 16.6 L8.6 7.6" stroke="#d81818" stroke-width="1.3" fill="none"/><path d="M0 6.8 L1 3.4 L3.4 6Z M7 8.4 L9.6 5.6 L10 9.2Z" fill="#d81818"/></svg><div class="t" style="top:231.05px;font-size:11.4px;line-height:16px;color:#dedede;left:27.3px;letter-spacing:-0.066px;">Dielectric _material</div>
<div style="left:0;top:252px;width:305px;height:28px;background:#5d5d5d;border-bottom:1px solid #666666;box-sizing:border-box"></div><div style="left:6px;top:257.1px;width:18px;height:18px;border-radius:50%;background:linear-gradient(172deg,#3e2810 0%,#7a5228 36%,#a87a48 58%,#f2d2a2 69%,#a87848 80%,#4a3018 100%);transform:scaleY(.92);"></div><div class="t" style="top:259.05px;font-size:11.4px;line-height:16px;color:#dedede;left:27.3px;letter-spacing:-0.172px;">Hair Tube Shader</div>
<div style="left:0;top:280px;width:305px;height:28px;background:#5d5d5d;border-bottom:1px solid #666666;box-sizing:border-box"></div><div style="left:6px;top:285.1px;width:18px;height:18px;border-radius:50%;background:linear-gradient(to right,rgba(0,0,0,0) 48%,#2c2c2c 52%,#3a3a3a 100%),radial-gradient(circle farthest-side at 30% 32%,#f4f4f4 0%,#b8b8b8 9%,#828282 26%,#5c5c5c 60%,#484848 100%);box-shadow:inset 0 0 0 1.2px #e4e4e4;"></div><div class="t" style="top:287.05px;font-size:11.4px;line-height:16px;color:#dedede;left:27.3px;letter-spacing:0.006px;">Hot Ocean</div>
<div style="left:0;top:308px;width:305px;height:28px;background:#5d5d5d;border-bottom:1px solid #666666;box-sizing:border-box"></div><div style="left:7px;top:314.1px;width:16px;height:16px;border-radius:50%;background:radial-gradient(circle farthest-side at 40% 36%,#8c8c8c 0%,#787878 45%,#3e3e3e 100%);"></div><div class="t" style="top:315.05px;font-size:11.4px;line-height:16px;color:#dedede;left:27.3px;letter-spacing:-0.183px;">Lambert</div>
<div style="left:0;top:336px;width:305px;height:28px;background:#5d5d5d;border-bottom:1px solid #666666;box-sizing:border-box"></div><div style="left:7px;top:342.1px;width:16px;height:16px;border-radius:50%;background:linear-gradient(135deg,#8a8a8a 0%,#6a6a6a 38%,#e0d870 40%,#e0d870 50%,#3a3a9a 52%,#2a2a78 100%);"></div><div class="t" style="top:343.05px;font-size:11.4px;line-height:16px;color:#dedede;left:27.3px;letter-spacing:-0.274px;">Layered Shader</div>
<div style="left:0;top:364px;width:305px;height:28px;background:#5d5d5d;border-bottom:1px solid #666666;box-sizing:border-box"></div><div style="left:6px;top:369.1px;width:18px;height:18px;border-radius:50%;background:linear-gradient(to right,rgba(0,0,0,0) 48%,#2c2c2c 52%,#3a3a3a 100%),radial-gradient(circle farthest-side at 30% 32%,#f4f4f4 0%,#b8b8b8 9%,#828282 26%,#5c5c5c 60%,#484848 100%);box-shadow:inset 0 0 0 1.2px #e4e4e4;"></div><div class="t" style="top:371.05px;font-size:11.4px;line-height:16px;color:#dedede;left:27.3px;letter-spacing:0.011px;">Mdl _material</div>
<div style="left:0;top:392px;width:305px;height:28px;background:#5d5d5d;border-bottom:1px solid #666666;box-sizing:border-box"></div><div style="left:6px;top:397.1px;width:18px;height:18px;border-radius:50%;background:radial-gradient(circle farthest-side at 38% 34%,#ececec 0%,#dcdcdc 9%,#e23c3c 15%,#c01010 30%,#8a0808 58%,#3c0202 88%,#2a0101 100%);"></div><div class="t" style="top:399.05px;font-size:11.4px;line-height:16px;color:#dedede;left:27.3px;letter-spacing:-0.042px;">Mi _car _paint _phen</div>
<div style="left:0;top:420px;width:305px;height:28px;background:#5d5d5d;border-bottom:1px solid #666666;box-sizing:border-box"></div><div style="left:6px;top:425.1px;width:18px;height:18px;border-radius:50%;background:radial-gradient(circle farthest-side at 38% 34%,#ececec 0%,#dcdcdc 9%,#e23c3c 15%,#c01010 30%,#8a0808 58%,#3c0202 88%,#2a0101 100%);"></div><div class="t" style="left:10.6px;top:428.1px;font-size:12.5px;line-height:16px;color:#f0c0c0;font-weight:bold;opacity:.5">X</div><div class="t" style="top:427.05px;font-size:11.4px;line-height:16px;color:#dedede;left:27.3px;letter-spacing:-0.121px;">Mi _car _paint _phen _x</div>
<div style="left:0;top:448px;width:305px;height:28px;background:#5d5d5d;border-bottom:1px solid #666666;box-sizing:border-box"></div><div style="left:5px;top:452.1px;width:12px;height:12px;border-radius:50%;background:radial-gradient(circle farthest-side at 38% 34%,#ececec 0%,#dcdcdc 9%,#e23c3c 15%,#c01010 30%,#8a0808 58%,#3c0202 88%,#2a0101 100%);opacity:.55"></div><div style="left:8px;top:454.1px;width:12px;height:12px;border-radius:50%;background:radial-gradient(circle farthest-side at 38% 34%,#ececec 0%,#dcdcdc 9%,#e23c3c 15%,#c01010 30%,#8a0808 58%,#3c0202 88%,#2a0101 100%);opacity:.8"></div><div style="left:11.0px;top:458.1px;width:13.0px;height:13.0px;border-radius:50%;background:radial-gradient(circle farthest-side at 38% 34%,#ececec 0%,#dcdcdc 9%,#e23c3c 15%,#c01010 30%,#8a0808 58%,#3c0202 88%,#2a0101 100%);"></div><div class="t" style="left:14.4px;top:458.5px;font-size:9px;line-height:14px;color:#f0c0c0;font-weight:bold;opacity:.55">X</div><div class="t" style="top:455.05px;font-size:11.4px;line-height:16px;color:#dedede;left:27.3px;letter-spacing:-0.229px;">Mi _car _paint _phen _x _passes</div>
<div style="left:0;top:476px;width:305px;height:28px;background:#5d5d5d;border-bottom:1px solid #666666;box-sizing:border-box"></div><div style="left:6px;top:481.1px;width:18px;height:18px;border-radius:50%;background:radial-gradient(circle farthest-side at 38% 34%,#ffffff 0%,#fff8d8 9%,#e8c050 15%,#a88028 32%,#705010 60%,#2a1c04 92%);"></div><div class="t" style="top:483.05px;font-size:11.4px;line-height:16px;color:#dedede;left:27.3px;letter-spacing:0.02px;">Mi _metallic _paint</div>
<div style="left:0;top:504px;width:305px;height:28px;background:#5d5d5d;border-bottom:1px solid #666666;box-sizing:border-box"></div><div style="left:6px;top:509.1px;width:18px;height:18px;border-radius:50%;background:radial-gradient(circle farthest-side at 38% 34%,#ffffff 0%,#fff8d8 9%,#e8c050 15%,#a88028 32%,#705010 60%,#2a1c04 92%);"></div><div class="t" style="left:10.6px;top:512.1px;font-size:12.5px;line-height:16px;color:#f0e4c0;font-weight:bold;opacity:.5">X</div><div class="t" style="top:511.05px;font-size:11.4px;line-height:16px;color:#dedede;left:27.3px;letter-spacing:-0.073px;">Mi _metallic _paint _x</div>
<div style="left:0;top:532px;width:305px;height:28px;background:#5d5d5d;border-bottom:1px solid #666666;box-sizing:border-box"></div><div style="left:5px;top:536.1px;width:12px;height:12px;border-radius:50%;background:radial-gradient(circle farthest-side at 38% 34%,#ffffff 0%,#fff8d8 9%,#e8c050 15%,#a88028 32%,#705010 60%,#2a1c04 92%);opacity:.55"></div><div style="left:8px;top:538.1px;width:12px;height:12px;border-radius:50%;background:radial-gradient(circle farthest-side at 38% 34%,#ffffff 0%,#fff8d8 9%,#e8c050 15%,#a88028 32%,#705010 60%,#2a1c04 92%);opacity:.8"></div><div style="left:11.0px;top:542.1px;width:13.0px;height:13.0px;border-radius:50%;background:radial-gradient(circle farthest-side at 38% 34%,#ffffff 0%,#fff8d8 9%,#e8c050 15%,#a88028 32%,#705010 60%,#2a1c04 92%);"></div><div class="t" style="left:14.4px;top:542.5px;font-size:9px;line-height:14px;color:#f0e4c0;font-weight:bold;opacity:.55">X</div><div class="t" style="top:539.05px;font-size:11.4px;line-height:16px;color:#dedede;left:27.3px;letter-spacing:-0.201px;">Mi _metallic _paint _x _passes</div>
<div style="left:0;top:560px;width:305px;height:28px;background:#5d5d5d;border-bottom:1px solid #666666;box-sizing:border-box"></div><div style="left:6px;top:565.1px;width:18px;height:18px;border-radius:50%;background:radial-gradient(circle farthest-side at 66% 30%,#ffffff 0%,#ffffff 20%,#b4b4b4 42%,#707070 70%,#3a3a3a 100%);"></div><div class="t" style="top:567.05px;font-size:11.4px;line-height:16px;color:#dedede;left:27.3px;letter-spacing:-0.056px;">Mia _material</div>
<div style="left:0;top:588px;width:305px;height:28px;background:#5d5d5d;border-bottom:1px solid #666666;box-sizing:border-box"></div><div style="left:6px;top:593.1px;width:18px;height:18px;border-radius:50%;background:radial-gradient(circle farthest-side at 66% 30%,#ffffff 0%,#ffffff 20%,#b4b4b4 42%,#707070 70%,#3a3a3a 100%);"></div><div class="t" style="left:10.6px;top:596.1px;font-size:12.5px;line-height:16px;color:#f4f4f4;font-weight:bold;opacity:.55">X</div><div class="t" style="top:595.05px;font-size:11.4px;line-height:16px;color:#dedede;left:27.3px;letter-spacing:-0.191px;">Mia _material _x</div>
<div style="left:0;top:616px;width:305px;height:28px;background:#5d5d5d;border-bottom:1px solid #666666;box-sizing:border-box"></div><div style="left:5px;top:620.1px;width:12px;height:12px;border-radius:50%;background:radial-gradient(circle farthest-side at 66% 30%,#ffffff 0%,#ffffff 20%,#b4b4b4 42%,#707070 70%,#3a3a3a 100%);opacity:.5"></div><div style="left:8px;top:622.1px;width:12px;height:12px;border-radius:50%;background:radial-gradient(circle farthest-side at 66% 30%,#ffffff 0%,#ffffff 20%,#b4b4b4 42%,#707070 70%,#3a3a3a 100%);opacity:.75"></div><div style="left:11.0px;top:626.1px;width:13.0px;height:13.0px;border-radius:50%;background:radial-gradient(circle farthest-side at 66% 30%,#ffffff 0%,#ffffff 20%,#b4b4b4 42%,#707070 70%,#3a3a3a 100%);"></div><div class="t" style="left:14.4px;top:626.5px;font-size:9px;line-height:14px;color:#f4f4f4;font-weight:bold;opacity:.6">X</div><div class="t" style="top:623.05px;font-size:11.4px;line-height:16px;color:#dedede;left:27.3px;letter-spacing:-0.311px;">Mia _material _x _passes</div>
<div style="left:0;top:644px;width:305px;height:28px;background:#5d5d5d;border-bottom:1px solid #666666;box-sizing:border-box"></div><div style="left:6px;top:649.1px;width:18px;height:18px;border-radius:50%;background:radial-gradient(circle farthest-side at 36% 36%,#ffffff 0%,#b0b0b0 10%,#808080 28%,#5a5a5a 58%,#1e1e1e 100%);"></div><div class="t" style="top:651.05px;font-size:11.4px;line-height:16px;color:#dedede;left:27.3px;letter-spacing:0.172px;">Mib _illum _blinn</div>
<div style="left:0;top:672px;width:305px;height:28px;background:#5d5d5d;border-bottom:1px solid #666666;box-sizing:border-box"></div><div style="left:6px;top:677.1px;width:18px;height:18px;border-radius:50%;background:radial-gradient(circle farthest-side at 60% 30%,#ffffff 0%,#ffffff 34%,#b0b0b0 60%,#1a1a1a 96%);"></div><div class="t" style="top:679.05px;font-size:11.4px;line-height:16px;color:#dedede;left:27.3px;letter-spacing:0.146px;">Mib _illum _cooktorr</div>
</div>
<div style="left:421px;top:355px;width:12.6px;height:691px;background:#383838;"></div>
<div style="left:422.2px;top:368px;width:9.4px;height:53px;background:#5d5d5d;border-radius:5px;"></div>
<svg style="left:421.9px;top:357.6px" width="9.2" height="5.5" viewBox="0 0 9.2 5.5"><path d="M0 5.5 L4.6 0 L9.2 5.5Z" fill="#b4b4b4"/></svg><svg style="left:421.9px;top:1035.8px" width="9.2" height="5.5" viewBox="0 0 9.2 5.5"><path d="M0 0 L4.6 5.5 L9.2 0Z" fill="#b4b4b4"/></svg>
<div style="left:1.5px;top:1056px;width:63px;height:18px;background:#6b6b6b;border-radius:3px 3px 0 0;"></div>
<div class="t" style="top:1059.93px;font-size:11.75px;line-height:16px;color:#f0f0f0;left:-167.57px;width:400px;text-align:center;letter-spacing:-0.536px;">Create</div>
<div style="left:64.5px;top:1056.5px;width:50px;height:18px;background:#3a3a3a;border-radius:3px 3px 0 0;"></div>
<div class="t" style="top:1057.73px;font-size:11.75px;line-height:16px;color:#cdcdcd;left:-110.50px;width:400px;text-align:center;">Bins</div>
<div style="left:463.5px;top:303px;width:1px;height:20px;background:#6a6a6a"></div><div style="left:462.5px;top:308.4px;width:3px;height:9.2px;background:#7c7c7c;border-radius:1px"></div>
<div style="left:554.5px;top:303px;width:1px;height:20px;background:#6a6a6a"></div><div style="left:553.5px;top:308.4px;width:3px;height:9.2px;background:#7c7c7c;border-radius:1px"></div>
<div style="left:699.3px;top:303px;width:1px;height:20px;background:#6a6a6a"></div><div style="left:698.3px;top:308.4px;width:3px;height:9.2px;background:#7c7c7c;border-radius:1px"></div>
<div style="left:871.5px;top:303px;width:1px;height:20px;background:#6a6a6a"></div><div style="left:870.5px;top:308.4px;width:3px;height:9.2px;background:#7c7c7c;border-radius:1px"></div>
<div style="left:962.4px;top:303px;width:1px;height:20px;background:#6a6a6a"></div><div style="left:961.4px;top:308.4px;width:3px;height:9.2px;background:#7c7c7c;border-radius:1px"></div>
<svg style="left:460px;top:298px" width="540" height="30" viewBox="460 298 540 30"><rect x="476.5" y="306.6" width="13" height="13" fill="none" stroke="#cfcfcf" stroke-width="1.3"/><path d="M473.8 309.0 L481.2 313.1 L473.8 317.20000000000005Z" fill="#bdbdbd" stroke="#444" stroke-width=".7"/><rect x="502" y="306.6" width="13.8" height="13" fill="none" stroke="#cfcfcf" stroke-width="1.3"/><path d="M499.8 309.0 L507.2 313.1 L499.8 317.20000000000005Z" fill="#bdbdbd" stroke="#444" stroke-width=".7"/><path d="M512 309.0 L519.4 313.1 L512 317.20000000000005Z" fill="#bdbdbd" stroke="#444" stroke-width=".7"/><rect x="528.5" y="306.6" width="13" height="13" fill="none" stroke="#cfcfcf" stroke-width="1.3"/><path d="M538.9 309.0 L546.3 313.1 L538.9 317.20000000000005Z" fill="#bdbdbd" stroke="#444" stroke-width=".7"/><rect x="566.3" y="306.6" width="13.4" height="13" fill="none" stroke="#cfcfcf" stroke-width="1.2"/><path d="M570.9 306.8 Q571.956 310.54400000000004 575.6999999999999 311.6 Q571.956 312.656 570.9 316.40000000000003 Q569.8439999999999 312.656 566.1 311.6 Q569.8439999999999 310.54400000000004 570.9 306.8Z" fill="#45b1c0" stroke="#444" stroke-width=".5"/><path d="M576 313.2 Q576.814 316.08599999999996 579.7 316.9 Q576.814 317.714 576 320.59999999999997 Q575.186 317.714 572.3 316.9 Q575.186 316.08599999999996 576 313.2Z" fill="#45b1c0" stroke="#444" stroke-width=".5"/><path d="M577.2 306.1 Q577.6840000000001 307.81600000000003 579.4000000000001 308.3 Q577.6840000000001 308.784 577.2 310.5 Q576.716 308.784 575.0 308.3 Q576.716 307.81600000000003 577.2 306.1Z" fill="#45b1c0" stroke="#444" stroke-width=".5"/><rect x="592.2" y="305.2" width="16" height="15.4" fill="none" stroke="#45b1c0" stroke-width="1.4" stroke-dasharray="1.4 1.25"/><rect x="593.9" y="311.9" width="8.4" height="3.2" fill="#cfcfcf" stroke="#3c3c3c" stroke-width=".7"/><rect x="596.0" y="313" width="3" height="1" fill="#777"/><rect x="597.7" y="315.9" width="8.6" height="3.2" fill="#cfcfcf" stroke="#3c3c3c" stroke-width=".7"/><rect x="600.5" y="317" width="3" height="1" fill="#777"/><rect x="599" y="303.5" width="10.4" height="10.4" fill="#444"/><path d="M604.2 304.6 V313 M600 308.8 H608.4" stroke="#45b1c0" stroke-width="2"/><rect x="619.2" y="305.2" width="16" height="15.4" fill="none" stroke="#45b1c0" stroke-width="1.4" stroke-dasharray="1.4 1.25"/><rect x="620.9" y="311.9" width="8.4" height="3.2" fill="#cfcfcf" stroke="#3c3c3c" stroke-width=".7"/><rect x="623.0" y="313" width="3" height="1" fill="#777"/><rect x="624.7" y="315.9" width="8.6" height="3.2" fill="#cfcfcf" stroke="#3c3c3c" stroke-width=".7"/><rect x="627.5" y="317" width="3" height="1" fill="#777"/><rect x="627" y="306.6" width="9" height="4.6" fill="#444"/><path d="M628.1 308.9 H634.8" stroke="#45b1c0" stroke-width="2"/><g fill="#45b1c0" transform="translate(0,1)"><rect x="645.6" y="306.9" width="2.3" height="2.3"/><rect x="645.6" y="314.8" width="2.3" height="2.3"/><rect x="648.2" y="310.9" width="2.3" height="2.3"/><rect x="660" y="306.9" width="2.3" height="2.3"/><rect x="660" y="310.9" width="2.3" height="2.3"/><rect x="660" y="314.8" width="2.3" height="2.3"/><rect x="650.5" y="311.2" width="4" height="1.7"/><path d="M653.6 308.2 L658.4 312.05 L653.6 315.9Z"/></g><path d="M681 306.4 H678 Q676.2 306.4 676.2 308.4 V317.6 Q676.2 319.6 678 319.6 H681" fill="none" stroke="#cfcfcf" stroke-width="1.2"/><circle cx="676.3" cy="313" r="3.8" fill="#45b1c0"/><rect x="679.6" y="305" width="8.6" height="3" fill="#cfcfcf" stroke="#3c3c3c" stroke-width=".6"/><rect x="679.6" y="318" width="8.6" height="3" fill="#cfcfcf" stroke="#3c3c3c" stroke-width=".6"/><rect x="709.7" y="305.7" width="16.5" height="3.8" rx="1" fill="#c9c9c9"/><rect x="710.2" y="311.45" width="15.5" height="2.8" rx="1" fill="#3c3c3c" stroke="#c9c9c9" stroke-width="1"/><rect x="710.2" y="316.7" width="15.5" height="2.8" rx="1" fill="#3c3c3c" stroke="#c9c9c9" stroke-width="1"/><rect x="736.8" y="305.7" width="16.5" height="3.8" rx="1" fill="#c9c9c9"/><rect x="736.8" y="310.95" width="16.5" height="3.8" rx="1" fill="#c9c9c9"/><rect x="737.3" y="316.7" width="15.5" height="2.8" rx="1" fill="#3c3c3c" stroke="#c9c9c9" stroke-width="1"/><rect x="763.8" y="305.7" width="16.5" height="3.8" rx="1" fill="#c9c9c9"/><rect x="763.8" y="310.95" width="16.5" height="3.8" rx="1" fill="#c9c9c9"/><rect x="763.8" y="316.2" width="16.5" height="3.8" rx="1" fill="#c9c9c9"/><rect x="791.4" y="306.2" width="15.5" height="2.8" rx="1" fill="#3c3c3c" stroke="#c9c9c9" stroke-width="1"/><rect x="791.4" y="311.45" width="15.5" height="2.8" rx="1" fill="#3c3c3c" stroke="#c9c9c9" stroke-width="1"/><rect x="791.4" y="316.7" width="15.5" height="2.8" rx="1" fill="#3c3c3c" stroke="#c9c9c9" stroke-width="1"/><circle cx="823.8" cy="310.7" r="4.4" fill="none" stroke="#cfcfcf" stroke-width="1.7"/><path d="M827 314 L832.3 319.3" stroke="#cfcfcf" stroke-width="2.4"/><rect x="847.5" y="307.5" width="11" height="11" fill="none" stroke="#45b1c0" stroke-width="1"/><circle cx="854" cy="311.9" r="3.7" fill="#cdcdcd" stroke="#444" stroke-width=".7"/><rect x="846.6" y="312.4" width="6.8" height="6.8" fill="#444"/><rect x="848.5" y="313.5" width="4" height="4" fill="#444" stroke="#45b1c0" stroke-width="1"/><rect x="849.8" y="314.8" width="1.4" height="1.4" fill="#d8d8d8"/><path d="M847.5 312 V318.5 H853.8" fill="none" stroke="#45b1c0" stroke-width="1"/><path d="M887.5 304.9 V320.9 M893.5 304.9 V320.9 M882 310.5 H898.2 M882 315.5 H898.2" stroke="#5fb890" stroke-width="1.1"/><path d="M916.5 308.2 L913.8 305.6 Q911 304.2 908.6 306.6 Q906.6 309.2 908.6 311.6 L913.4 316.2" fill="none" stroke="#cfcfcf" stroke-width="2.7" transform="translate(1.2,.3)"/><path d="M911.8 313.8 L913.6 315.6 M917 307 L918.7 308.8" stroke="#8a8a8a" stroke-width="2.3"/><path d="M918.6 312.5 V323 M923.2 312.5 V323 M914.5 315.6 H926.5 M914.5 319.9 H926.5" stroke="#45b1c0" stroke-width="1.1"/><g opacity=".9"><path d="M937 309.5 Q941 304.5 946.5 306.5" fill="none" stroke="#4f6a72" stroke-width="2"/><path d="M935.8 307.2 L936.4 311.6 L940.6 310Z" fill="#4f6a72"/><rect x="936.5" y="313" width="14" height="7.5" fill="#55595c"/><rect x="938" y="316" width="5" height="1.6" fill="#44484b"/><circle cx="949" cy="314.6" r="3.6" fill="#666b6e" stroke="#4c5052" stroke-width=".8"/><path d="M949 312.4 V314.8 H950.8" stroke="#44484b" stroke-width=".9" fill="none"/></g><path d="M979.5 307.2 H986 Q987.3 307.2 987.3 308.5 V311 M987.3 317 V319.7 Q987.3 321 986 321 H979.5 M976.5 311.8 V316.8" fill="none" stroke="#cfcfcf" stroke-width="1.2"/><path d="M974.2 306.2 L979.4 309 L974.2 311.8Z M974.2 316.6 L979.4 319.4 L974.2 322.2Z" fill="#cfcfcf"/><path d="M983.9 310.6 L989.2 314.1 L983.9 317.6Z" fill="#45b1c0"/></svg><svg style="left:812.9px;top:299.7px" width="25.8" height="26.4" viewBox="-1 -1 25.8 26.4"><rect x="-0.7" y="-0.7" width="3.6" height="25.799999999999997" fill="#000"/><rect x="-0.7" y="-0.7" width="7.199999999999999" height="3.6" fill="#000"/><rect x="-0.7" y="21.5" width="7.199999999999999" height="3.6" fill="#000"/><rect x="20.900000000000002" y="-0.7" width="3.6" height="25.799999999999997" fill="#000"/><rect x="17.3" y="-0.7" width="7.199999999999999" height="3.6" fill="#000"/><rect x="17.3" y="21.5" width="7.199999999999999" height="3.6" fill="#000"/><rect x="0" y="0" width="2.2" height="24.4" fill="#00ff00"/><rect x="0" y="0" width="5.8" height="2.2" fill="#00ff00"/><rect x="0" y="22.2" width="5.8" height="2.2" fill="#00ff00"/><rect x="21.6" y="0" width="2.2" height="24.4" fill="#00ff00"/><rect x="18.0" y="0" width="5.8" height="2.2" fill="#00ff00"/><rect x="18.0" y="22.2" width="5.8" height="2.2" fill="#00ff00"/></svg>
<svg style="left:839.9px;top:299.7px" width="26.2" height="26.4" viewBox="-1 -1 26.2 26.4"><rect x="-0.7" y="-0.7" width="3.6" height="25.799999999999997" fill="#000"/><rect x="-0.7" y="-0.7" width="7.199999999999999" height="3.6" fill="#000"/><rect x="-0.7" y="21.5" width="7.199999999999999" height="3.6" fill="#000"/><rect x="21.3" y="-0.7" width="3.6" height="25.799999999999997" fill="#000"/><rect x="17.7" y="-0.7" width="7.199999999999999" height="3.6" fill="#000"/><rect x="17.7" y="21.5" width="7.199999999999999" height="3.6" fill="#000"/><rect x="0" y="0" width="2.2" height="24.4" fill="#00ff00"/><rect x="0" y="0" width="5.8" height="2.2" fill="#00ff00"/><rect x="0" y="22.2" width="5.8" height="2.2" fill="#00ff00"/><rect x="22.0" y="0" width="2.2" height="24.4" fill="#00ff00"/><rect x="18.4" y="0" width="5.8" height="2.2" fill="#00ff00"/><rect x="18.4" y="22.2" width="5.8" height="2.2" fill="#00ff00"/></svg>
<svg style="left:930.8px;top:299.7px" width="26.2" height="26.4" viewBox="-1 -1 26.2 26.4"><rect x="-0.7" y="-0.7" width="3.6" height="25.799999999999997" fill="#000"/><rect x="-0.7" y="-0.7" width="7.199999999999999" height="3.6" fill="#000"/><rect x="-0.7" y="21.5" width="7.199999999999999" height="3.6" fill="#000"/><rect x="21.3" y="-0.7" width="3.6" height="25.799999999999997" fill="#000"/><rect x="17.7" y="-0.7" width="7.199999999999999" height="3.6" fill="#000"/><rect x="17.7" y="21.5" width="7.199999999999999" height="3.6" fill="#000"/><rect x="0" y="0" width="2.2" height="24.4" fill="#00ff00"/><rect x="0" y="0" width="5.8" height="2.2" fill="#00ff00"/><rect x="0" y="22.2" width="5.8" height="2.2" fill="#00ff00"/><rect x="22.0" y="0" width="2.2" height="24.4" fill="#00ff00"/><rect x="18.4" y="0" width="5.8" height="2.2" fill="#00ff00"/><rect x="18.4" y="22.2" width="5.8" height="2.2" fill="#00ff00"/></svg>
<div style="left:995.3px;top:301px;width:178px;height:17.6px;background:#2b2b2b;border-radius:3px;"></div>
<div style="left:460px;top:328px;width:83px;height:21px;background:#6b6b6b;border-radius:3px 3px 0 0;"></div>
<div class="t" style="top:331.13px;font-size:11.75px;line-height:16px;color:#f0f0f0;left:301.50px;width:400px;text-align:center;">Untitled_1</div>
<div style="left:543.5px;top:328.5px;width:36.5px;height:20.5px;background:#3a3a3a;border-radius:3px 3px 0 0;"></div>
<div class="t" style="top:332.36px;font-size:10.5px;line-height:16px;color:#d8d8d8;left:361.50px;width:400px;text-align:center;">+</div>
<div style="left:460.5px;top:350px;width:993px;height:716.5px;background:#2b2b2b;border:1px solid #383838;box-sizing:border-box;"></div>
<div style="left:462px;top:351px;width:990px;height:714px;background:#2b2b2b;border:2px solid #4e80a5;box-sizing:border-box;border-radius:2px;"></div>
<div class="t" style="top:656.56px;font-size:12.8px;line-height:16px;color:#f2f2f2;left:523.2px;letter-spacing:0.063px;">place2dTexture1</div>
<div style="left:519px;top:676px;width:148px;height:54.5px;background:#51397a;border:1px solid #1a1a1a;border-radius:5px;box-sizing:border-box;"></div>
<div style="left:619px;top:682px;width:14px;height:14px;border-radius:50%;background:#b6b6b6"></div><div class="t" style="left:619px;top:680.9px;width:14px;text-align:center;font-size:9.6px;line-height:16px;font-weight:bold;color:#51397a">S</div><svg style="left:638.5px;top:682.3px" width="15" height="15" viewBox="0 0 15 15"><rect x=".6" y="0.55" width="13.2" height="3.1" rx="1.55" fill="none" stroke="#c8c0da" stroke-width=".9"/><rect x=".6" y="5.5" width="13.2" height="3.1" rx="1.55" fill="none" stroke="#c8c0da" stroke-width=".9"/><rect x=".6" y="10.450000000000001" width="13.2" height="3.1" rx="1.55" fill="none" stroke="#c8c0da" stroke-width=".9"/></svg><div class="t" style="top:705.95px;font-size:11.7px;line-height:16px;color:#f2f2f2;right:1265.45px;text-align:right;letter-spacing:0.054px;">Out UV</div>
<svg style="left:651px;top:710px" width="10" height="10" viewBox="0 0 10 10"><rect x=".5" y=".5" width="9" height="9" fill="none" stroke="#968eac" stroke-width="1"/><path d="M5 1 V9 M1 5 H9" stroke="#968eac" stroke-width="1"/></svg><svg style="left:532px;top:679px" width="24" height="24" viewBox="0 0 24 24"><rect x="2.5" y="2.5" width="19" height="19" fill="#e8e8e8"/><rect x="2.5" y="2.5" width="6.3" height="6.3" fill="#a8a8a8"/><rect x="15.2" y="2.5" width="6.3" height="6.3" fill="#a8a8a8"/><rect x="2.5" y="15.2" width="6.3" height="6.3" fill="#a8a8a8"/><rect x="15.2" y="15.2" width="6.3" height="6.3" fill="#a8a8a8"/><rect x="8.8" y="8.8" width="6.4" height="6.4" fill="#a8a8a8"/><path d="M2.5 2.5 H21.5 V21.5 H2.5Z M12 2.5 V21.5 M2.5 12 H21.5" fill="none" stroke="#c01818" stroke-width="1"/><g fill="#b01010"><circle cx="2.5" cy="2.5" r="2"/><circle cx="21.5" cy="2.5" r="2"/><circle cx="21.5" cy="21.5" r="2"/></g><g fill="#2850c8"><circle cx="12" cy="2.5" r="1.9"/><circle cx="12" cy="21.5" r="1.9"/></g><g fill="#18c018"><circle cx="2.5" cy="12" r="1.9"/><circle cx="21.5" cy="12" r="1.9"/></g><circle cx="12" cy="12" r="1.9" fill="#c8b818"/><path d="M0 17.5 H6 M3 17.5 V24" stroke="#18e018" stroke-width="1.8"/></svg><div class="t" style="top:655.76px;font-size:12.8px;line-height:16px;color:#4de3a3;left:708.9px;letter-spacing:-0.152px;">A_1001.jpg</div>
<div style="left:704px;top:674px;width:150px;height:95px;background:#555555;border:3px solid #46e6a6;border-radius:7px;box-sizing:border-box;overflow:hidden;"><div style="left:0;top:46px;width:150px;height:19px;background:#616161"></div></div>
<div style="left:718px;top:678px;width:24.5px;height:24px;background:#98cdf0;border:1.5px solid #fff;box-sizing:border-box;"></div>
<div style="left:805px;top:681px;width:14px;height:14px;border-radius:50%;background:#b6b6b6"></div><div class="t" style="left:805px;top:679.9px;width:14px;text-align:center;font-size:9.6px;line-height:16px;font-weight:bold;color:#555">S</div><svg style="left:824.5px;top:681px" width="15" height="15" viewBox="0 0 15 15"><rect x=".6" y="0.55" width="13.2" height="3.1" rx="1.55" fill="none" stroke="#c8c8c8" stroke-width=".9"/><rect x=".6" y="5.5" width="13.2" height="3.1" rx="1.55" fill="none" stroke="#c8c8c8" stroke-width=".9"/><rect x=".6" y="10.450000000000001" width="13.2" height="3.1" rx="1.55" fill="none" stroke="#c8c8c8" stroke-width=".9"/></svg><div class="t" style="top:704.75px;font-size:11.7px;line-height:16px;color:#f2f2f2;right:1079.07px;text-align:right;letter-spacing:0.332px;">Out Alpha</div>
<div class="t" style="top:723.75px;font-size:11.7px;line-height:16px;color:#f2f2f2;right:1079.48px;text-align:right;letter-spacing:0.223px;">Out Color</div>
<svg style="left:837px;top:727px" width="10" height="10" viewBox="0 0 10 10"><rect x=".5" y=".5" width="9" height="9" fill="none" stroke="#929292" stroke-width="1"/><path d="M5 1 V9 M1 5 H9" stroke="#929292" stroke-width="1"/></svg><svg style="left:712px;top:746px" width="10" height="10" viewBox="0 0 10 10"><rect x=".5" y=".5" width="9" height="9" fill="none" stroke="#929292" stroke-width="1"/><path d="M5 1 V9 M1 5 H9" stroke="#929292" stroke-width="1"/></svg><div class="t" style="top:742.65px;font-size:11.7px;line-height:16px;color:#f2f2f2;left:722.8px;letter-spacing:0.032px;">Uv Coord</div>
<div class="t" style="top:640.76px;font-size:12.8px;line-height:16px;color:#f2f2f2;left:944px;letter-spacing:0.083px;">cube</div>
<div style="left:937px;top:657px;width:155px;height:214px;background:#555555;border:3.6px solid #ff0000;border-radius:8px;box-sizing:border-box;overflow:hidden;"><div style="left:0;top:47px;width:160px;height:19px;background:#616161"></div><div style="left:0;top:85px;width:160px;height:19px;background:#616161"></div><div style="left:0;top:123px;width:160px;height:19px;background:#616161"></div><div style="left:0;top:161px;width:160px;height:19px;background:#616161"></div></div>
<div style="left:954px;top:663px;width:24px;height:24px;background:#2b2b2b;"></div>
<svg style="left:954px;top:663px" width="24" height="24" viewBox="0 0 24 24"><defs><radialGradient id="cb1" cx="40%" cy="32%" r="70%"><stop offset="0" stop-color="#fff" stop-opacity=".9"/><stop offset=".5" stop-color="#fff" stop-opacity="0"/><stop offset="1" stop-color="#000" stop-opacity=".6"/></radialGradient><clipPath id="cbc"><circle cx="12" cy="11.5" r="9"/></clipPath></defs><g clip-path="url(#cbc)"><rect x="2" y="2" width="10.5" height="20" fill="#c4ccd0"/><rect x="12.5" y="2" width="10" height="20" fill="#4f86aa"/><rect x="2" y="2" width="3" height="20" fill="#6f9dbb"/></g><circle cx="12" cy="11.5" r="9" fill="url(#cb1)"/></svg><div style="left:1040px;top:667px;width:14px;height:14px;border-radius:50%;background:#b6b6b6"></div><div class="t" style="left:1040px;top:665.9px;width:14px;text-align:center;font-size:9.6px;line-height:16px;font-weight:bold;color:#555">S</div><svg style="left:1059.5px;top:667px" width="15" height="15" viewBox="0 0 15 15"><rect x=".6" y="0.55" width="13.2" height="3.1" rx="1.55" fill="none" stroke="#c8c8c8" stroke-width=".9"/><rect x=".6" y="5.5" width="13.2" height="3.1" rx="1.55" fill="none" stroke="#c8c8c8" stroke-width=".9"/><rect x=".6" y="10.450000000000001" width="13.2" height="3.1" rx="1.55" fill="none" stroke="#c8c8c8" stroke-width=".9"/></svg><div class="t" style="top:689.95px;font-size:11.7px;line-height:16px;color:#f2f2f2;right:844.18px;text-align:right;letter-spacing:0.223px;">Out Color</div>
<svg style="left:1072px;top:694px" width="10" height="10" viewBox="0 0 10 10"><rect x=".5" y=".5" width="9" height="9" fill="none" stroke="#929292" stroke-width="1"/><path d="M5 1 V9 M1 5 H9" stroke="#929292" stroke-width="1"/></svg><svg style="left:947px;top:712px" width="10" height="10" viewBox="0 0 10 10"><rect x=".5" y=".5" width="9" height="9" fill="none" stroke="#929292" stroke-width="1"/><path d="M5 1 V9 M1 5 H9" stroke="#929292" stroke-width="1"/></svg><div class="t" style="top:709.25px;font-size:11.7px;line-height:16px;color:#f2f2f2;left:957.7px;letter-spacing:0.09px;">Color</div>
<svg style="left:947px;top:731px" width="10" height="10" viewBox="0 0 10 10"><rect x=".5" y=".5" width="9" height="9" fill="none" stroke="#929292" stroke-width="1"/><path d="M5 1 V9 M1 5 H9" stroke="#929292" stroke-width="1"/></svg><div class="t" style="top:728.15px;font-size:11.7px;line-height:16px;color:#f2f2f2;left:957.7px;letter-spacing:0.236px;">Ambient Color</div>
<svg style="left:947px;top:750px" width="10" height="10" viewBox="0 0 10 10"><rect x=".5" y=".5" width="9" height="9" fill="none" stroke="#929292" stroke-width="1"/><path d="M5 1 V9 M1 5 H9" stroke="#929292" stroke-width="1"/></svg><div class="t" style="top:747.05px;font-size:11.7px;line-height:16px;color:#f2f2f2;left:957.7px;letter-spacing:-0.144px;">Incandescence</div>
<div class="t" style="top:765.95px;font-size:11.7px;line-height:16px;color:#f2f2f2;left:957.7px;letter-spacing:0.258px;">Matte Opacity</div>
<div class="t" style="top:784.85px;font-size:11.7px;line-height:16px;color:#f2f2f2;left:957.7px;letter-spacing:0.138px;">Diffuse</div>
<svg style="left:947px;top:807px" width="10" height="10" viewBox="0 0 10 10"><rect x=".5" y=".5" width="9" height="9" fill="none" stroke="#929292" stroke-width="1"/><path d="M5 1 V9 M1 5 H9" stroke="#929292" stroke-width="1"/></svg><div class="t" style="top:803.75px;font-size:11.7px;line-height:16px;color:#f2f2f2;left:957.7px;letter-spacing:0.018px;">Normal Camera</div>
<div class="t" style="top:822.65px;font-size:11.7px;line-height:16px;color:#f2f2f2;left:957.7px;letter-spacing:-0.104px;">Translucence</div>
<svg style="left:947px;top:845px" width="10" height="10" viewBox="0 0 10 10"><rect x=".5" y=".5" width="9" height="9" fill="none" stroke="#929292" stroke-width="1"/><path d="M5 1 V9 M1 5 H9" stroke="#929292" stroke-width="1"/></svg><div class="t" style="top:841.55px;font-size:11.7px;line-height:16px;color:#f2f2f2;left:957.7px;letter-spacing:-0.103px;">Transparency</div>
<div class="t" style="top:699.16px;font-size:12.8px;line-height:16px;color:#f2f2f2;left:1164px;letter-spacing:-0.098px;">lambert2SG</div>
<div style="left:1160px;top:718px;width:148px;height:92.5px;background:#303f78;border:1px solid #151515;border-radius:6px;box-sizing:border-box;overflow:hidden;"><div style="left:0;top:46px;width:150px;height:19px;background:#414f88"></div></div>
<svg style="left:1173px;top:721px" width="24" height="24" viewBox="0 0 24 24"><defs><radialGradient id="sg1" cx="40%" cy="35%" r="65%"><stop offset="0" stop-color="#aaa"/><stop offset="1" stop-color="#555"/></radialGradient><linearGradient id="sg2" x1="0" x2="1"><stop offset="0" stop-color="#6a6a6a"/><stop offset=".4" stop-color="#a8a8a8"/><stop offset="1" stop-color="#4a4a4a"/></linearGradient></defs><circle cx="12" cy="12" r="11" fill="#2c3768" stroke="#b8bcc8" stroke-width="1"/><rect x="11.5" y="5" width="7" height="10.5" rx="1.5" fill="url(#sg2)"/><ellipse cx="15" cy="5.5" rx="3.5" ry="1.4" fill="#8a8a8a"/><circle cx="8.8" cy="15" r="4.6" fill="url(#sg1)"/></svg><svg style="left:1279.8px;top:724px" width="15" height="15" viewBox="0 0 15 15"><rect x=".6" y="0.55" width="13.2" height="3.1" rx="1.55" fill="none" stroke="#aab0cc" stroke-width=".9"/><rect x=".6" y="5.5" width="13.2" height="3.1" rx="1.55" fill="none" stroke="#aab0cc" stroke-width=".9"/><rect x=".6" y="10.450000000000001" width="13.2" height="3.1" rx="1.55" fill="none" stroke="#aab0cc" stroke-width=".9"/></svg><div class="t" style="top:747.75px;font-size:11.7px;line-height:16px;color:#f2f2f2;left:1177.7px;letter-spacing:-0.201px;">Surface Shader</div>
<div class="t" style="top:766.75px;font-size:11.7px;line-height:16px;color:#f2f2f2;left:1177.7px;letter-spacing:0.031px;">Volume Shader</div>
<div class="t" style="top:785.75px;font-size:11.7px;line-height:16px;color:#f2f2f2;left:1177.7px;letter-spacing:-0.003px;">Displacement Shader</div>
<svg style="left:460px;top:350px" width="994" height="716" viewBox="460 350 994 716"><path d="M673 690.5 H699" stroke="#ffa500" stroke-width="1.6" fill="none"/><path d="M684.5 686.3 L693.5 690.5 L684.5 694.7Z" fill="#ffb400"/><path d="M672 714 C686 716 684 748 700 750.6" stroke="#38c838" stroke-width="1.1" fill="none"/><path d="M682 734.5 L690.2 731.8 L689 742Z" fill="#48dc48"/><path d="M858 731.8 C896 731.8 896 717 935 717" stroke="#38c838" stroke-width="1.1" fill="none"/><path d="M894 720.2 L903.5 721.6 L897.2 728Z" fill="#48dc48"/><path d="M1093 698 C1124 698 1124 755.4 1154.5 755.4" stroke="#e01010" stroke-width="1.1" fill="none"/><path d="M1120.5 728.5 L1129 725 L1127.5 735Z" fill="#f01010"/><circle cx="519.5" cy="691" r="7" fill="#ffffff" stroke="#111" stroke-width="1"/><circle cx="666.8" cy="690.7" r="7" fill="#ffa500" stroke="#111" stroke-width="1"/><circle cx="667.2" cy="714" r="5.2" fill="#4ddc4d" stroke="#111" stroke-width="1"/><circle cx="705.3" cy="690.3" r="7" fill="#ffa500" stroke="#111" stroke-width="1"/><circle cx="852.8" cy="690" r="7" fill="#4ddc4d" stroke="#111" stroke-width="1"/><circle cx="852.8" cy="712.7" r="5.2" fill="#4ddc4d" stroke="#111" stroke-width="1"/><circle cx="852.8" cy="731.8" r="5.2" fill="#4ddc4d" stroke="#111" stroke-width="1"/><circle cx="705.3" cy="750.6" r="5.2" fill="#4ddc4d" stroke="#111" stroke-width="1"/><circle cx="940.5" cy="675.2" r="7" fill="#4ddc4d" stroke="#111" stroke-width="1"/><circle cx="1087.8" cy="675.2" r="7" fill="#e40000" stroke="#111" stroke-width="1"/><circle cx="1087.8" cy="697.9" r="5.2" fill="#e40000" stroke="#111" stroke-width="1"/><circle cx="940.5" cy="717.0" r="5.2" fill="#e40000" stroke="#111" stroke-width="1"/><circle cx="940.5" cy="735.9" r="5.2" fill="#e40000" stroke="#111" stroke-width="1"/><circle cx="940.5" cy="754.8" r="5.2" fill="#e40000" stroke="#111" stroke-width="1"/><circle cx="940.5" cy="773.7" r="5.2" fill="#4ddc4d" stroke="#111" stroke-width="1"/><circle cx="940.5" cy="792.6" r="5.2" fill="#4ddc4d" stroke="#111" stroke-width="1"/><circle cx="940.5" cy="811.5" r="5.2" fill="#4ddc4d" stroke="#111" stroke-width="1"/><circle cx="940.5" cy="830.4" r="5.2" fill="#4ddc4d" stroke="#111" stroke-width="1"/><circle cx="940.5" cy="849.3" r="5.2" fill="#e40000" stroke="#111" stroke-width="1"/><circle cx="1160" cy="732.8" r="7" fill="#e40000" stroke="#111" stroke-width="1"/><circle cx="1307.4" cy="732.8" r="7" fill="#ffffff" stroke="#111" stroke-width="1"/><circle cx="1160" cy="755.4" r="5.2" fill="#e40000" stroke="#111" stroke-width="1"/><circle cx="1160" cy="774.5" r="5.2" fill="#000" stroke="#111" stroke-width="1"/><circle cx="1160" cy="793.4" r="5.2" fill="#000" stroke="#111" stroke-width="1"/></svg>
<div style="left:1464px;top:49px;width:1.2px;height:1025px;background:#343434;"></div>
<div class="dots" style="left:1472.9px;top:56.7px;width:159px"></div>
<div class="t" style="top:53.34px;font-size:9.7px;line-height:16px;color:#c8c8c8;left:1644px;letter-spacing:-0.114px;">Material Viewer</div>
<div class="dots" style="left:1720.9px;top:56.7px;width:156px"></div>
<div style="left:1883.5px;top:53px;width:14px;height:14px;background:#444;border:1px solid #2c2c2c;border-radius:3px;box-sizing:border-box;box-shadow:0 0 0 1px #515151;"></div>
<div style="left:1899.5px;top:53px;width:14px;height:14px;background:#444;border:1px solid #2c2c2c;border-radius:3px;box-sizing:border-box;box-shadow:0 0 0 1px #515151;"></div>
<svg style="left:1883.5px;top:53px" width="14" height="14" viewBox="0 0 14 14"><path d="M5.5 5 V3.2 H11 V8 H9" fill="none" stroke="#cfcfcf" stroke-width="1.4"/><rect x="3.2" y="6" width="5.3" height="4.6" fill="none" stroke="#cfcfcf" stroke-width="1.4"/></svg><svg style="left:1899.5px;top:53px" width="14" height="14" viewBox="0 0 14 14"><path d="M3.5 3.5 L10.5 10.5 M10.5 3.5 L3.5 10.5" stroke="#d2d2d2" stroke-width="2"/></svg>
<div style="left:1475.5px;top:74px;width:1px;height:20px;background:#6a6a6a"></div><div style="left:1474.5px;top:79.4px;width:3px;height:9.2px;background:#7c7c7c;border-radius:1px"></div>
<div style="left:1483px;top:74px;width:97px;height:19px;background:#5d5d5d;border-radius:2px;"></div>
<div style="left:1560px;top:74px;width:1.5px;height:19px;background:#444;"></div>
<svg style="left:1565.5px;top:81.0px" width="10" height="6" viewBox="0 0 10 6"><path d="M0 0 H10 L5 5.6Z" fill="#d0d0d0"/></svg><div class="t" style="top:75.95px;font-size:11.4px;line-height:16px;color:#eeeeee;left:1486px;letter-spacing:0.058px;">Hardware</div>
<div style="left:1587px;top:74px;width:113px;height:19px;background:#5d5d5d;border-radius:2px;"></div>
<div style="left:1679.5px;top:74px;width:1.5px;height:19px;background:#444;"></div>
<svg style="left:1685.25px;top:81.0px" width="10" height="6" viewBox="0 0 10 6"><path d="M0 0 H10 L5 5.6Z" fill="#d0d0d0"/></svg><div class="t" style="top:75.95px;font-size:11.4px;line-height:16px;color:#eeeeee;left:1590.4px;letter-spacing:-0.189px;">Shader Ball</div>
<div style="left:1707px;top:74px;width:129px;height:19px;background:#4b4b4b;border-radius:2px;"></div>
<div style="left:1815px;top:74px;width:1.5px;height:19px;background:#454545;"></div>
<svg style="left:1821.0px;top:81.0px" width="10" height="6" viewBox="0 0 10 6"><path d="M0 0 H10 L5 5.6Z" fill="#6e6e6e"/></svg><div class="t" style="top:75.95px;font-size:11.4px;line-height:16px;color:#7e7e7e;left:1710.6px;letter-spacing:0.307px;">Off</div>
<div style="left:1841.5px;top:74px;width:1px;height:20px;background:#6a6a6a"></div><div style="left:1840.5px;top:79.4px;width:3px;height:9.2px;background:#7c7c7c;border-radius:1px"></div>
<svg style="left:1847.5px;top:73.5px" width="20" height="20" viewBox="-1 -1 20 20"><rect x="-0.7" y="-0.7" width="3.2" height="19.4" fill="#000"/><rect x="-0.7" y="-0.7" width="5.6" height="3.2" fill="#000"/><rect x="-0.7" y="15.5" width="5.6" height="3.2" fill="#000"/><rect x="15.5" y="-0.7" width="3.2" height="19.4" fill="#000"/><rect x="13.100000000000001" y="-0.7" width="5.6" height="3.2" fill="#000"/><rect x="13.100000000000001" y="15.5" width="5.6" height="3.2" fill="#000"/><rect x="0" y="0" width="1.8" height="18" fill="#00ff00"/><rect x="0" y="0" width="4.2" height="1.8" fill="#00ff00"/><rect x="0" y="16.2" width="4.2" height="1.8" fill="#00ff00"/><rect x="16.2" y="0" width="1.8" height="18" fill="#00ff00"/><rect x="13.8" y="0" width="4.2" height="1.8" fill="#00ff00"/><rect x="13.8" y="16.2" width="4.2" height="1.8" fill="#00ff00"/></svg>
<svg style="left:1851.5px;top:77.5px" width="12" height="12" viewBox="0 0 12 12"><circle cx="6" cy="6" r="5.4" fill="#9a9a9a"/><circle cx="6" cy="6" r="2" fill="#444"/><path d="M6 .6 L8 4 M11.4 6 L8 8 M6 11.4 L4 8 M.6 6 L4 4 M2.2 2.2 L6 4 M9.8 9.8 L6 8" stroke="#444" stroke-width="1"/></svg><div style="left:1869.5px;top:76.5px;width:37.5px;height:13px;background:#2b2b2b;border-radius:2px;"></div>
<div class="t" style="top:75.38px;font-size:11.3px;line-height:16px;color:#e6e6e6;left:1873.5px;">0.00</div>
<svg style="left:1909.5px;top:73.5px" width="20" height="20" viewBox="-1 -1 20 20"><rect x="-0.7" y="-0.7" width="3.2" height="19.4" fill="#000"/><rect x="-0.7" y="-0.7" width="5.6" height="3.2" fill="#000"/><rect x="-0.7" y="15.5" width="5.6" height="3.2" fill="#000"/><rect x="15.5" y="-0.7" width="3.2" height="19.4" fill="#000"/><rect x="13.100000000000001" y="-0.7" width="5.6" height="3.2" fill="#000"/><rect x="13.100000000000001" y="15.5" width="5.6" height="3.2" fill="#000"/><rect x="0" y="0" width="1.8" height="18" fill="#00ff00"/><rect x="0" y="0" width="4.2" height="1.8" fill="#00ff00"/><rect x="0" y="16.2" width="4.2" height="1.8" fill="#00ff00"/><rect x="16.2" y="0" width="1.8" height="18" fill="#00ff00"/><rect x="13.8" y="0" width="4.2" height="1.8" fill="#00ff00"/><rect x="13.8" y="16.2" width="4.2" height="1.8" fill="#00ff00"/></svg>
<div style="left:1470px;top:101px;width:445px;height:397.7px;background:#5a5a5a;"></div>
<svg style="left:1470px;top:101px" width="445" height="397" viewBox="1470 101 445 397"><defs>
<radialGradient id="sph" gradientUnits="userSpaceOnUse" cx="1605" cy="195" r="200">
<stop offset="0" stop-color="#b8f4ff"/><stop offset=".1" stop-color="#a8e2fa"/><stop offset=".22" stop-color="#90caee"/><stop offset=".47" stop-color="#79add0"/><stop offset=".65" stop-color="#5f8fb2"/><stop offset=".72" stop-color="#56809e"/><stop offset=".775" stop-color="#446580"/><stop offset=".83" stop-color="#31485a"/><stop offset="1" stop-color="#31485a"/></radialGradient>
<linearGradient id="sphd" gradientUnits="userSpaceOnUse" x1="1700" y1="200" x2="1775" y2="215"><stop offset="0" stop-color="#31485a" stop-opacity="0"/><stop offset=".75" stop-color="#31485a" stop-opacity="1"/><stop offset="1" stop-color="#31485a"/></linearGradient>
<linearGradient id="hole" gradientUnits="userSpaceOnUse" x1="1642" y1="206" x2="1732" y2="292"><stop offset="0" stop-color="#a6d8f8"/><stop offset=".25" stop-color="#8dc0e4"/><stop offset=".5" stop-color="#6e9cbe"/><stop offset=".68" stop-color="#4f7592"/><stop offset=".82" stop-color="#364f62"/><stop offset="1" stop-color="#30475a"/></linearGradient>
<linearGradient id="ringo" gradientUnits="userSpaceOnUse" x1="1630" y1="195" x2="1745" y2="310"><stop offset="0" stop-color="#ffffff"/><stop offset=".35" stop-color="#f2f2f2"/><stop offset=".6" stop-color="#b0b0b0"/><stop offset=".8" stop-color="#6e6e6e"/><stop offset="1" stop-color="#5a5a5a"/></linearGradient>
<linearGradient id="ringi" gradientUnits="userSpaceOnUse" x1="1640" y1="200" x2="1740" y2="305"><stop offset="0" stop-color="#5c5c5c"/><stop offset=".35" stop-color="#686868"/><stop offset=".55" stop-color="#9a9a9a"/><stop offset=".75" stop-color="#e8e8e8"/><stop offset="1" stop-color="#ffffff"/></linearGradient>
<linearGradient id="stripe" gradientUnits="userSpaceOnUse" x1="1652" y1="0" x2="1740" y2="0"><stop offset="0" stop-color="#d8eef8" stop-opacity="0"/><stop offset=".12" stop-color="#f4f8fa"/><stop offset=".44" stop-color="#f0f0f0"/><stop offset=".46" stop-color="#dcdcdc"/><stop offset=".75" stop-color="#c4c4c4"/><stop offset=".9" stop-color="#9aa4aa"/><stop offset="1" stop-color="#5f88a6" stop-opacity="0"/></linearGradient>
<linearGradient id="btop" gradientUnits="userSpaceOnUse" x1="1540" y1="0" x2="1850" y2="0"><stop offset="0" stop-color="#83b8dc"/><stop offset=".3" stop-color="#7fb2d6"/><stop offset=".55" stop-color="#6a9bbd"/><stop offset=".75" stop-color="#4e748f"/><stop offset="1" stop-color="#3b566b"/></linearGradient>
<linearGradient id="bside" gradientUnits="userSpaceOnUse" x1="1537" y1="0" x2="1848" y2="0"><stop offset="0" stop-color="#78acd0"/><stop offset=".1" stop-color="#6fa3c8"/><stop offset=".3" stop-color="#5d8fb3"/><stop offset=".55" stop-color="#3d5a70"/><stop offset=".7" stop-color="#31485a"/><stop offset="1" stop-color="#31485a"/></linearGradient>
<linearGradient id="gside" gradientUnits="userSpaceOnUse" x1="1575" y1="0" x2="1718" y2="0"><stop offset="0" stop-color="#6fa3c8" stop-opacity="0"/><stop offset=".1" stop-color="#c8c8c8"/><stop offset=".25" stop-color="#b4b4b4"/><stop offset=".45" stop-color="#929292"/><stop offset=".47" stop-color="#7e7e7e"/><stop offset=".9" stop-color="#666"/><stop offset="1" stop-color="#31485a" stop-opacity="0"/></linearGradient>
<linearGradient id="gtop" gradientUnits="userSpaceOnUse" x1="1600" y1="0" x2="1715" y2="0"><stop offset="0" stop-color="#7fb2d6" stop-opacity="0"/><stop offset=".15" stop-color="#e6e6e6"/><stop offset=".5" stop-color="#dcdcdc"/><stop offset=".85" stop-color="#b0b0b0"/><stop offset="1" stop-color="#5d8fb3" stop-opacity="0"/></linearGradient>
<linearGradient id="bfloor" gradientUnits="userSpaceOnUse" x1="1600" y1="0" x2="1800" y2="0"><stop offset="0" stop-color="#7db2d6"/><stop offset=".45" stop-color="#6d9ec1"/><stop offset=".75" stop-color="#54809f"/><stop offset="1" stop-color="#446782"/></linearGradient>
<linearGradient id="gtopv" gradientUnits="userSpaceOnUse" x1="0" y1="378" x2="0" y2="422"><stop offset="0" stop-color="#000" stop-opacity=".38"/><stop offset=".5" stop-color="#000" stop-opacity=".16"/><stop offset="1" stop-color="#000" stop-opacity="0"/></linearGradient>
<clipPath id="sphc"><circle cx="1692" cy="256" r="119"/></clipPath>
<clipPath id="topc"><ellipse cx="1692" cy="364" rx="155" ry="56"/></clipPath>
</defs><path d="M1537 364 A155 56 0 0 0 1847 364 V394 A155 58 0 0 1 1537 394Z" fill="url(#bside)"/><path d="M1537 364 A155 56 0 0 0 1847 364 V394 A155 58 0 0 1 1537 394Z" fill="url(#gside)"/><ellipse cx="1692" cy="364" rx="155" ry="56" fill="url(#btop)"/><g clip-path="url(#topc)"><path d="M1680 350 L1560 446 L1722 446 L1708 350Z" fill="url(#gtop)"/><path d="M1680 350 L1560 446 L1722 446 L1708 350Z" fill="url(#gtopv)"/></g><path d="M1537.5 365 A155 56 0 0 0 1846.5 365" fill="none" stroke="#a8d4f0" stroke-width="2" opacity=".35"/><path d="M1580 403 A155 56 0 0 0 1712 419.5" fill="none" stroke="#ffffff" stroke-width="2" opacity=".45"/><ellipse cx="1697" cy="360" rx="100" ry="36" fill="url(#bfloor)" opacity=".8"/><ellipse cx="1700" cy="359" rx="93" ry="31" fill="url(#bfloor)"/><path d="M1604 352 Q1600 330 1612 322 L1640 330 L1640 372 Q1612 372 1604 352Z" fill="#3d586d"/><path d="M1603.5 356 Q1602.5 344 1607 336 Q1612 360 1634 376 L1628 379 Q1607 371 1603.5 356Z" fill="#d4d4d4"/><path d="M1607 336 Q1609 332 1612 331 Q1615 356 1641 373.6 L1634 376 Q1612 360 1607 336Z" fill="#7e7e7e"/><path d="M1614 330 Q1618 354 1644 373 Q1690 392 1750 384 Q1790 376 1797 356 L1797 340 L1640 330Z" fill="url(#bfloor)"/><path d="M1640 378 Q1700 398 1760 386 Q1790 378 1798 360" fill="none" stroke="#8fc2e4" stroke-width="2.5" opacity=".7"/><path d="M1566.7 324 L1568.3 344.6 L1576.2 349.8 L1584.6 364.1 L1583.8 375.5 L1569.6 361.2Z" fill="#6397bc"/><path d="M1568.3 335.9 L1573.1 330.8 L1593 329.9 L1592 343.5 L1576.2 349.8 L1568.3 344.6Z" fill="#5a8cb0"/><path d="M1566.7 324 L1577.5 313.7 L1579.4 305.8 L1584.6 305 L1587.3 312.2 L1595.2 326.7 L1593 329.9 L1573.1 330.8 L1568.3 335.9Z" fill="#7db3d8"/><path d="M1568.3 344.6 L1592 343.5 L1599.6 359.6 L1584.6 364.1 L1576.2 349.8Z" fill="#79aed3"/><path d="M1584.6 364.1 L1599.6 359.6 L1600 370 L1583.8 375.5Z" fill="#4f7fa3"/><path d="M1593.3 367.6 L1619.4 378.6 L1617.8 380.4 L1591.7 371Z" fill="#7db3d8"/><path d="M1591.7 371 L1617.8 380.4 L1617.8 385 L1613.9 385.8 L1591.7 375.5Z" fill="#5a8cb0"/><path d="M1800.8 311.9 L1833.2 289.8 L1838 336.5 L1839.6 368.1 L1832.4 371.3 L1830.9 349.1 L1807.1 344.4 L1792.9 346 L1783.4 336.5Z" fill="#405d74"/><path d="M1809.5 276.3 L1833.2 289.8 L1800.8 311.9 L1797 300Z" fill="#6a9cbf"/><path d="M1806.3 329.8 L1835.6 329.4 L1838.8 336.5 L1838.8 344.4 L1808.7 342Z" fill="#5b88a8"/><path d="M1808.7 342 L1838.8 344.4 L1839.6 368.1 L1832.4 371.3 L1831.7 349.1Z" fill="#365064"/><path d="M1808.7 342 L1831.7 349.1 L1816.6 363.4 L1796 361Z" fill="#5a86a6"/><path d="M1816.6 363.4 L1831.7 350.7 L1833.2 371.3 L1818.2 385.5Z" fill="#34495c"/><path d="M1796 361 L1816.6 363.4 L1810.3 371.3 L1781.8 385.5 L1769.9 380.8Z" fill="#5a86a6"/><path d="M1781.8 385.5 L1810.3 371.3 L1811.9 385.5 L1781 398.2Z" fill="#34495c"/><path d="M1731.2 396.6 L1772.3 390.3 L1776.3 395 L1735.9 403Z" fill="#4a6f8c"/><path d="M1712.2 417.2 L1769.1 407.7 L1775.5 409.3 L1766 412.4 L1713.7 420.4Z" fill="#2f4557"/><path d="M1625 389.7 Q1661 396 1700 396" fill="none" stroke="#6e6e6e" stroke-width="2.2"/><path d="M1624 392 Q1661 398.4 1700 398.4" fill="none" stroke="#f4f4f4" stroke-width="1.6"/><path d="M1610.7 395.3 Q1650 405 1700 406.5" fill="none" stroke="#8a8a8a" stroke-width="2"/><path d="M1609 397.6 Q1650 407.6 1700 409" fill="none" stroke="#ffffff" stroke-width="2"/><path d="M1595.7 405.5 Q1647 416 1708 417.6" fill="none" stroke="#6a6a6a" stroke-width="2.4"/><path d="M1594 408 Q1647 418.6 1708 420" fill="none" stroke="#f0f0f0" stroke-width="1.6"/><path d="M1661.4 392.9 L1640.8 421.4 L1641.6 449.5" fill="none" stroke="#8c8c8c" stroke-width="1"/><circle cx="1692" cy="256" r="119" fill="url(#sph)"/><g clip-path="url(#sphc)"><path d="M1650 130 L1742 130 L1722 188 L1662 188Z" fill="url(#stripe)"/><path d="M1692.5 134 L1688.5 186" stroke="#b8b8b8" stroke-width=".8"/></g><ellipse cx="1685.7" cy="250.6" rx="74.5" ry="73" fill="url(#ringo)"/><ellipse cx="1686.6" cy="250.6" rx="65.5" ry="66" fill="url(#ringi)"/><ellipse cx="1686.6" cy="250.6" rx="56.8" ry="56.5" fill="url(#hole)"/></svg>
<div style="left:1470px;top:498.7px;width:445px;height:1.1px;background:#353535;"></div>
<div class="dots" style="left:1472.9px;top:513.1px;width:162px"></div>
<div class="t" style="top:509.24px;font-size:9.7px;line-height:16px;color:#c8c8c8;left:1644.5px;letter-spacing:0.019px;">Property Editor</div>
<div class="dots" style="left:1718.9px;top:513.1px;width:159px"></div>
<div style="left:1883.5px;top:508.5px;width:14px;height:14px;background:#444;border:1px solid #2c2c2c;border-radius:3px;box-sizing:border-box;box-shadow:0 0 0 1px #515151;"></div>
<div style="left:1899.5px;top:508.5px;width:14px;height:14px;background:#444;border:1px solid #2c2c2c;border-radius:3px;box-sizing:border-box;box-shadow:0 0 0 1px #515151;"></div>
<svg style="left:1883.5px;top:508.5px" width="14" height="14" viewBox="0 0 14 14"><path d="M5.5 5 V3.2 H11 V8 H9" fill="none" stroke="#cfcfcf" stroke-width="1.4"/><rect x="3.2" y="6" width="5.3" height="4.6" fill="none" stroke="#cfcfcf" stroke-width="1.4"/></svg><svg style="left:1899.5px;top:508.5px" width="14" height="14" viewBox="0 0 14 14"><path d="M3.5 3.5 L10.5 10.5 M10.5 3.5 L3.5 10.5" stroke="#d2d2d2" stroke-width="2"/></svg>
<div style="left:1471px;top:527.8px;width:443px;height:544.7px;background:#444;border:1px solid #343434;box-sizing:border-box;"></div>
<div style="left:1474px;top:531px;width:76px;height:20.5px;background:#6b6b6b;border-radius:3px 3px 0 0;"></div>
<div class="t" style="top:534.39px;font-size:11px;line-height:16px;color:#f0f0f0;left:1311.69px;width:400px;text-align:center;letter-spacing:-0.61px;">A_1001_1</div>
<div style="left:1474px;top:552.3px;width:437px;height:2.6px;background:#2e2e2e;"></div>
<div class="t" style="top:562.44px;font-size:11.15px;line-height:16px;color:#d0d0d0;right:296.04px;text-align:right;letter-spacing:0.364px;">file:</div>
<div style="left:1625px;top:558px;width:154px;height:23.5px;background:#2b2b2b;border-radius:3px;"></div>
<div class="t" style="top:563.19px;font-size:11px;line-height:16px;color:#e6e6e6;left:1630px;letter-spacing:-0.582px;">A_1001_1</div>
<div style="left:1785px;top:557.2px;width:70px;height:26px;background:#5d5d5d;border-radius:1px;"></div>
<div class="t" style="top:562.49px;font-size:11px;line-height:16px;color:#eeeeee;left:1619.87px;width:400px;text-align:center;letter-spacing:-0.266px;">Presets</div>
<svg style="left:1859.5px;top:557px" width="27" height="26" viewBox="-1 -1 27 26"><rect x="-0.7" y="-0.7" width="3.6" height="25.4" fill="#000"/><rect x="-0.7" y="-0.7" width="7.199999999999999" height="3.6" fill="#000"/><rect x="-0.7" y="21.1" width="7.199999999999999" height="3.6" fill="#000"/><rect x="22.1" y="-0.7" width="3.6" height="25.4" fill="#000"/><rect x="18.5" y="-0.7" width="7.199999999999999" height="3.6" fill="#000"/><rect x="18.5" y="21.1" width="7.199999999999999" height="3.6" fill="#000"/><rect x="0" y="0" width="2.2" height="24" fill="#00ff00"/><rect x="0" y="0" width="5.8" height="2.2" fill="#00ff00"/><rect x="0" y="21.8" width="5.8" height="2.2" fill="#00ff00"/><rect x="22.8" y="0" width="2.2" height="24" fill="#00ff00"/><rect x="19.2" y="0" width="5.8" height="2.2" fill="#00ff00"/><rect x="19.2" y="21.8" width="5.8" height="2.2" fill="#00ff00"/></svg>
<svg style="left:1866px;top:563px" width="14" height="14" viewBox="0 0 14 14"><rect x="4.5" y="3.5" width="7.5" height="9.5" fill="#45b1c0"/><rect x="1.5" y="1" width="7" height="5.5" fill="#c8c8c8" stroke="#444" stroke-width=".8"/></svg><svg style="left:1886px;top:557px" width="27" height="26" viewBox="-1 -1 27 26"><rect x="-0.7" y="-0.7" width="3.6" height="25.4" fill="#000"/><rect x="-0.7" y="-0.7" width="7.199999999999999" height="3.6" fill="#000"/><rect x="-0.7" y="21.1" width="7.199999999999999" height="3.6" fill="#000"/><rect x="22.1" y="-0.7" width="3.6" height="25.4" fill="#000"/><rect x="18.5" y="-0.7" width="7.199999999999999" height="3.6" fill="#000"/><rect x="18.5" y="21.1" width="7.199999999999999" height="3.6" fill="#000"/><rect x="0" y="0" width="2.2" height="24" fill="#00ff00"/><rect x="0" y="0" width="5.8" height="2.2" fill="#00ff00"/><rect x="0" y="21.8" width="5.8" height="2.2" fill="#00ff00"/><rect x="22.8" y="0" width="2.2" height="24" fill="#00ff00"/><rect x="19.2" y="0" width="5.8" height="2.2" fill="#00ff00"/><rect x="19.2" y="21.8" width="5.8" height="2.2" fill="#00ff00"/></svg>
<svg style="left:1892px;top:562px" width="16" height="16" viewBox="0 0 16 16"><path d="M1.5 5 V14 H11" fill="none" stroke="#d4d4d4" stroke-width="2"/><rect x="4.5" y="1.5" width="9.5" height="9.5" fill="#45b1c0"/></svg><div style="left:1474px;top:584px;width:437px;height:487.5px;background:#444;border:1px solid #353535;box-sizing:border-box;"></div>
<div class="t" style="top:589.94px;font-size:11.15px;line-height:16px;color:#d0d0d0;left:1485.9px;letter-spacing:0.122px;"><b>View:</b> Lookdev</div>
<div class="t" style="top:589.94px;font-size:11.15px;line-height:16px;color:#d0d0d0;right:16.39px;text-align:right;letter-spacing:0.012px;"><b>Template:</b> file</div>
<div style="left:1481px;top:634px;width:422.6px;height:177px;background:#494949;"></div>
<div style="left:1481px;top:831px;width:422.6px;height:145px;background:#494949;"></div>
<div style="left:1479px;top:613.2px;width:427px;height:19.3px;background:#5d5d5d;border-radius:2px;"></div>
<svg style="left:1486.5px;top:617.8000000000001px" width="10" height="6" viewBox="0 0 10 6"><path d="M0 0 H10 L5 5.6Z" fill="#eeeeee"/></svg><div style="left:1482px;top:810.7px;width:421px;height:19.3px;background:#5d5d5d;border-radius:2px;"></div>
<svg style="left:1489.5px;top:815.3000000000001px" width="10" height="6" viewBox="0 0 10 6"><path d="M0 0 H10 L5 5.6Z" fill="#eeeeee"/></svg><div class="t" style="top:615.14px;font-size:11.15px;line-height:16px;color:#e4e4e4;left:1513.4px;font-weight:bold;letter-spacing:-0.128px;">File Attributes</div>
<div class="t" style="top:812.74px;font-size:11.15px;line-height:16px;color:#e0e0e0;left:1516.2px;letter-spacing:0.068px;">Color Balance</div>
<div class="t" style="top:638.34px;font-size:11.15px;line-height:16px;color:#cfcfcf;right:291.12px;text-align:right;letter-spacing:-0.121px;">Filter Type</div>
<div style="left:1633px;top:636.4px;width:95px;height:18.4px;background:#5d5d5d;border-radius:2px;"></div>
<div style="left:1707.5px;top:636.4px;width:1.5px;height:18.4px;background:#444;"></div>
<svg style="left:1713.25px;top:643.1px" width="10" height="6" viewBox="0 0 10 6"><path d="M0 0 H10 L5 5.6Z" fill="#d0d0d0"/></svg><div class="t" style="top:638.14px;font-size:11.15px;line-height:16px;color:#eeeeee;left:1636.5px;letter-spacing:0.286px;">Quadratic</div>
<div class="t" style="top:658.14px;font-size:11.15px;line-height:16px;color:#cfcfcf;right:291.10px;text-align:right;letter-spacing:-0.1px;">Pre Filter</div>
<div style="left:1632px;top:658.3px;width:16px;height:15.5px;background:#2b2b2b;border-radius:2px;"></div>
<div class="t" style="top:678.14px;font-size:11.15px;line-height:16px;color:#cfcfcf;right:291.04px;text-align:right;letter-spacing:-0.041px;">Pre Filter Radius</div>
<div style="left:1633px;top:677px;width:67px;height:18px;background:#2b2b2b;border-radius:3px;"></div>
<div class="t" style="top:678.74px;font-size:11.15px;line-height:16px;color:#e6e6e6;left:1637px;letter-spacing:-0.372px;">2.000</div>
<div style="left:1703.2px;top:683.0999999999999px;width:165.8px;height:4px;background:#2b2b2b;border-radius:2px;"></div>
<div style="left:1722px;top:678.5px;width:7px;height:13px;background:#c4c4c4;border-radius:2px;"></div>
<div style="left:1877px;top:679px;width:11.6px;height:11.6px;background:#fff;border-radius:1.5px;overflow:hidden"><div style="left:5.8px;top:1px;width:4.8px;height:4.8px;background:#000"></div><div style="left:1px;top:5.8px;width:4.8px;height:4.8px;background:#000"></div></div><div class="t" style="top:704.34px;font-size:11.15px;line-height:16px;color:#cfcfcf;right:290.29px;text-align:right;letter-spacing:-0.087px;">Image Name</div>
<div style="left:1633px;top:703px;width:243.5px;height:18px;background:#2b2b2b;border-radius:3px;overflow:hidden;"><div class="t" style="left:-4.3px;top:1.6px;font-size:11.15px;line-height:16px;color:#e6e6e6;white-space:nowrap;letter-spacing:.297px">Aymeric\Ornatrix\source_images\A_&lt;UDIM&gt;.tif</div></div>
<svg style="left:1881.5px;top:705.5px" width="16" height="14" viewBox="0 0 16 14"><path d="M.5 2 Q.5 1 1.5 1 H6 L7.5 2.5 H14.5 Q15.5 2.5 15.5 3.5 V12 Q15.5 13 14.5 13 H1.5 Q.5 13 .5 12Z" fill="#f0d060" stroke="#b89020" stroke-width=".8"/><path d="M.8 4.6 H15.2" stroke="#fff2a8" stroke-width="1"/></svg><div class="t" style="top:731.14px;font-size:11.15px;line-height:16px;color:#cfcfcf;right:290.00px;text-align:right;letter-spacing:0.196px;">UV Tiling Mode</div>
<div style="left:1634px;top:729.3px;width:115.5px;height:18.7px;background:#5d5d5d;border-radius:2px;"></div>
<div style="left:1750.8px;top:729.3px;width:3px;height:18.7px;background:#5d5d5d;"></div>
<div class="t" style="top:731.14px;font-size:11.15px;line-height:16px;color:#eeeeee;left:1637.5px;letter-spacing:-0.025px;">UDIM (Mari)</div>
<div class="t" style="top:731.14px;font-size:11.15px;line-height:16px;color:#cfcfcf;left:1758.8px;letter-spacing:0.393px;">4 tiles found</div>
<div class="t" style="top:757.14px;font-size:11.15px;line-height:16px;color:#cfcfcf;right:290.15px;text-align:right;letter-spacing:0.049px;">Preview Quality</div>
<div style="left:1634px;top:755.2px;width:126px;height:18.8px;background:#5d5d5d;border-radius:2px;"></div>
<div style="left:1739.7px;top:755.2px;width:1.5px;height:18.8px;background:#444;"></div>
<svg style="left:1745.35px;top:762.1px" width="10" height="6" viewBox="0 0 10 6"><path d="M0 0 H10 L5 5.6Z" fill="#d0d0d0"/></svg><div class="t" style="top:757.14px;font-size:11.15px;line-height:16px;color:#eeeeee;left:1637.5px;letter-spacing:0.356px;">High Quality</div>
<div style="left:1775px;top:752.2px;width:100px;height:26px;background:#5d5d5d;border-radius:1px;"></div>
<div class="t" style="top:757.14px;font-size:11.15px;line-height:16px;color:#eeeeee;left:1624.98px;width:400px;text-align:center;letter-spacing:-0.045px;">Generate Preview</div>
<div class="t" style="top:783.14px;font-size:11.15px;line-height:16px;color:#cfcfcf;right:290.31px;text-align:right;letter-spacing:-0.111px;">Color Space</div>
<div style="left:1632px;top:781px;width:210px;height:19.5px;background:#5d5d5d;border-radius:2px;"></div>
<div style="left:1821.3px;top:781px;width:1.5px;height:19.5px;background:#444;"></div>
<svg style="left:1827.15px;top:788.25px" width="10" height="6" viewBox="0 0 10 6"><path d="M0 0 H10 L5 5.6Z" fill="#f4f4f4"/></svg><div class="t" style="top:783.29px;font-size:11.15px;line-height:16px;color:#eeeeee;left:1637.5px;letter-spacing:-1.107px;">sRGB</div>
<div class="t" style="top:836.44px;font-size:11.15px;line-height:16px;color:#cfcfcf;right:288.10px;text-align:right;letter-spacing:-0.097px;">Exposure</div>
<div style="left:1635px;top:835px;width:68px;height:17.6px;background:#2b2b2b;border-radius:3px;"></div>
<div class="t" style="top:836.84px;font-size:11.15px;line-height:16px;color:#e6e6e6;left:1639.5px;letter-spacing:-0.247px;">0.000</div>
<div style="left:1705.7px;top:840.8px;width:160.3px;height:4px;background:#2b2b2b;border-radius:2px;"></div>
<div style="left:1783.3px;top:836.2px;width:7px;height:13px;background:#c4c4c4;border-radius:2px;"></div>
<div style="left:1874.5px;top:837.2px;width:11.6px;height:11.6px;background:#fff;border-radius:1.5px;overflow:hidden"><div style="left:5.8px;top:1px;width:4.8px;height:4.8px;background:#000"></div><div style="left:1px;top:5.8px;width:4.8px;height:4.8px;background:#000"></div></div><div class="t" style="top:857.14px;font-size:11.15px;line-height:16px;color:#cfcfcf;right:287.71px;text-align:right;letter-spacing:0.289px;">Default Color</div>
<div style="left:1635px;top:858.3px;width:68px;height:12.4px;background:#bcbcbc;"></div>
<div style="left:1705.7px;top:861.8px;width:160.3px;height:4px;background:#2b2b2b;border-radius:2px;"></div>
<div style="left:1783.3px;top:857.2px;width:7px;height:13px;background:#c4c4c4;border-radius:2px;"></div>
<div style="left:1874.5px;top:858px;width:11.6px;height:11.6px;background:#fff;border-radius:1.5px;overflow:hidden"><div style="left:5.8px;top:1px;width:4.8px;height:4.8px;background:#000"></div><div style="left:1px;top:5.8px;width:4.8px;height:4.8px;background:#000"></div></div><div class="t" style="top:877.34px;font-size:11.15px;line-height:16px;color:#cfcfcf;right:287.88px;text-align:right;letter-spacing:0.117px;">Color Gain</div>
<div style="left:1635px;top:878px;width:68px;height:13px;background:#ffffff;"></div>
<div style="left:1705.7px;top:881.8px;width:160.3px;height:4px;background:#2b2b2b;border-radius:2px;"></div>
<div style="left:1859.3px;top:877.2px;width:7px;height:13px;background:#c4c4c4;border-radius:2px;"></div>
<div style="left:1874.5px;top:878px;width:11.6px;height:11.6px;background:#fff;border-radius:1.5px;overflow:hidden"><div style="left:5.8px;top:1px;width:4.8px;height:4.8px;background:#000"></div><div style="left:1px;top:5.8px;width:4.8px;height:4.8px;background:#000"></div></div><div class="t" style="top:897.34px;font-size:11.15px;line-height:16px;color:#cfcfcf;right:287.72px;text-align:right;letter-spacing:0.278px;">Color Offset</div>
<div style="left:1635px;top:898px;width:68px;height:13px;background:#000000;"></div>
<div style="left:1705.7px;top:901.8px;width:160.3px;height:4px;background:#2b2b2b;border-radius:2px;"></div>
<div style="left:1708.3px;top:897.2px;width:7px;height:13px;background:#c4c4c4;border-radius:2px;"></div>
<div style="left:1874.5px;top:898.5px;width:11.6px;height:11.6px;background:#fff;border-radius:1.5px;overflow:hidden"><div style="left:5.8px;top:1px;width:4.8px;height:4.8px;background:#000"></div><div style="left:1px;top:5.8px;width:4.8px;height:4.8px;background:#000"></div></div><div class="t" style="top:918.44px;font-size:11.15px;line-height:16px;color:#cfcfcf;right:287.84px;text-align:right;letter-spacing:0.164px;">Alpha Gain</div>
<div style="left:1635px;top:917px;width:68px;height:17.8px;background:#2b2b2b;border-radius:3px;"></div>
<div class="t" style="top:918.94px;font-size:11.15px;line-height:16px;color:#e6e6e6;left:1639.5px;letter-spacing:-0.247px;">1.000</div>
<div style="left:1705.7px;top:923.0999999999999px;width:160.3px;height:4px;background:#2b2b2b;border-radius:2px;"></div>
<div style="left:1783.3px;top:918.5px;width:7px;height:13px;background:#c4c4c4;border-radius:2px;"></div>
<div style="left:1874.5px;top:919.5px;width:11.6px;height:11.6px;background:#fff;border-radius:1.5px;overflow:hidden"><div style="left:5.8px;top:1px;width:4.8px;height:4.8px;background:#000"></div><div style="left:1px;top:5.8px;width:4.8px;height:4.8px;background:#000"></div></div><div class="t" style="top:940.44px;font-size:11.15px;line-height:16px;color:#cfcfcf;right:287.71px;text-align:right;letter-spacing:0.29px;">Alpha Offset</div>
<div style="left:1635px;top:939px;width:68px;height:17.8px;background:#2b2b2b;border-radius:3px;"></div>
<div class="t" style="top:940.94px;font-size:11.15px;line-height:16px;color:#e6e6e6;left:1639.5px;letter-spacing:-0.247px;">0.000</div>
<div style="left:1705.7px;top:945.0999999999999px;width:160.3px;height:4px;background:#2b2b2b;border-radius:2px;"></div>
<div style="left:1708.3px;top:940.5px;width:7px;height:13px;background:#c4c4c4;border-radius:2px;"></div>
<div style="left:1874.5px;top:941.5px;width:11.6px;height:11.6px;background:#fff;border-radius:1.5px;overflow:hidden"><div style="left:5.8px;top:1px;width:4.8px;height:4.8px;background:#000"></div><div style="left:1px;top:5.8px;width:4.8px;height:4.8px;background:#000"></div></div><div class="t" style="top:960.44px;font-size:11.15px;line-height:16px;color:#cfcfcf;right:287.96px;text-align:right;letter-spacing:0.038px;">Alpha Is Luminance</div>
<div style="left:1635px;top:960px;width:16px;height:15.8px;background:#2b2b2b;border-radius:2px;"></div>
</div></body></html>
